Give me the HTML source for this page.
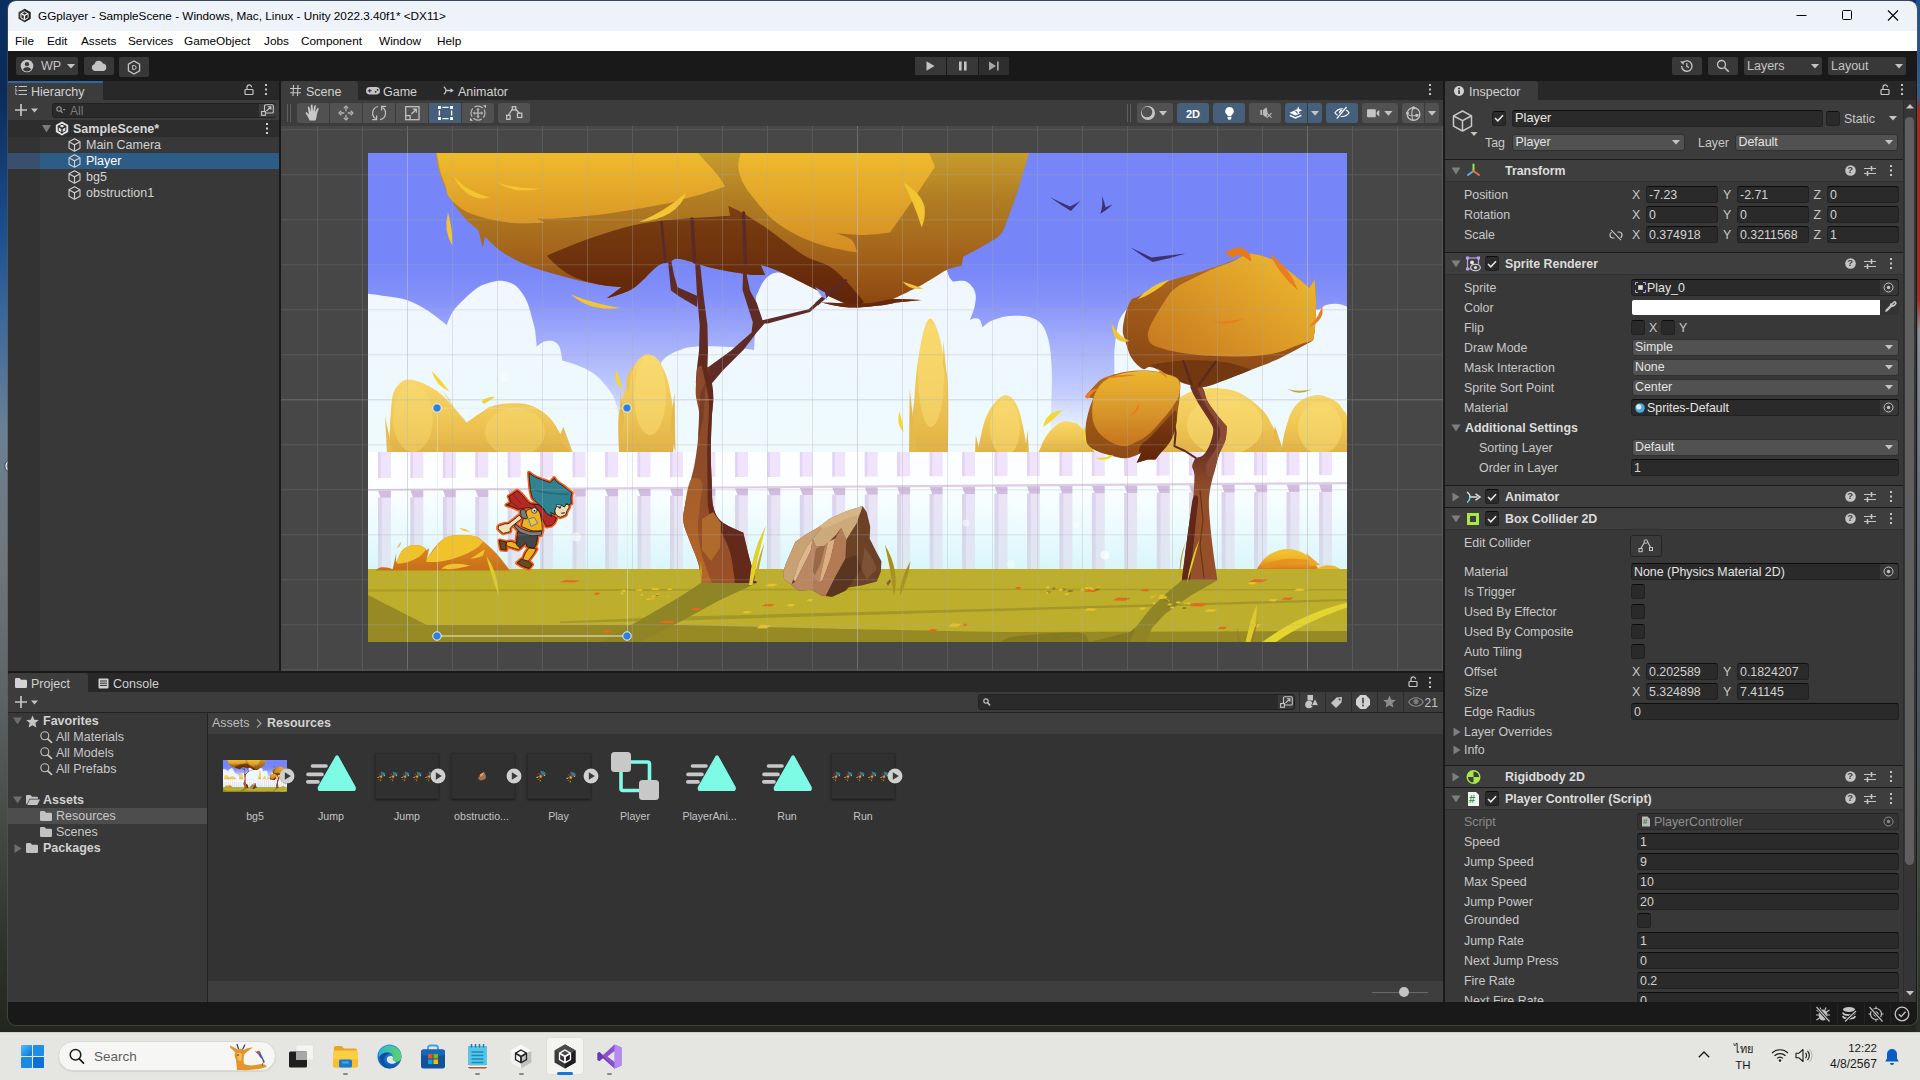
<!DOCTYPE html>
<html lang="en"><head><meta charset="utf-8"><title>GGplayer - SampleScene - Unity</title>
<style>
*{box-sizing:border-box;margin:0;padding:0}
html,body{width:1920px;height:1080px;overflow:hidden;background:#1a2a3a}
body{position:relative;font-family:"Liberation Sans",sans-serif;font-size:12px;color:#d2d2d2}
.a{position:absolute}
.t{position:absolute;white-space:nowrap;line-height:16px;height:16px}
.b{font-weight:bold}
svg{position:absolute;overflow:visible}
.mn{top:33px;font-size:11.8px;color:#000}
.tb{background:#383838;border-radius:2px}
.fld{height:17px;background:#2a2a2a;border:1px solid #212121;border-top-color:#0d0d0d;border-radius:3px}
.fld.dim{background:#323232;border-color:#2a2a2a;border-top-color:#222}
.dd{height:17px;background:#515151;border:1px solid #303030;border-radius:3px}
.cb{width:14px;height:15px;background:#2a2a2a;border:1px solid #212121;border-top-color:#0d0d0d;border-radius:3px}
.dot{top:1072.500px;width:5px;height:2.500px;border-radius:1.250px;background:#8a8a88}

</style></head>
<body>

<!-- desktop.html -->
<div class="a" id="desk" style="left:0;top:0;width:1920px;height:1080px;background:linear-gradient(180deg,#0b2f63 0px,#0a2b5a 90px,#1b4f8c 230px,#3f6c9c 330px,#6b7f92 430px,#70777c 560px,#5d6264 700px,#474b47 820px,#2e322b 950px,#23261f 1032px)"></div>
<div class="a" style="left:1916px;top:0;width:4px;height:1032px;background:linear-gradient(180deg,#1d4f8d 0px,#2b5c98 95px,#b3221c 110px,#b3221c 300px,#8d8f98 330px,#5f6a78 520px,#4a5660 700px,#3a4438 900px,#2a2e26 1032px)"></div>

<svg id="deskc" style="left:0;top:458px;overflow:hidden" width="8" height="16" viewBox="0 0 8 16"><path d="M9 3.500A4.800 4.800 0 0 0 9 12.500" stroke="#f4f4f4" stroke-width="1.300" fill="none"/><path d="M9 2.300A6 6 0 0 0 9 13.700" stroke="rgba(20,40,90,.6)" stroke-width="1" fill="none"/></svg>

<!-- chrome.html -->
<div class="a" id="win" style="left:8px;top:1px;width:1908.500px;height:1023.500px;background:#191919;border-radius:8px;overflow:hidden;box-shadow:0 0 0 1px rgba(90,90,90,.55)">
 <div class="a" style="left:0;top:0;width:1909px;height:30px;background:#eef3fa"></div>
 <div class="a" style="left:0;top:30px;width:1909px;height:20px;background:#ffffff"></div>
</div>
<!-- title bar -->
<svg style="left:17px;top:8px" width="15" height="15" viewBox="0 0 18 18"><path d="M9 .8 16.2 5v8L9 17.2 1.8 13V5z" fill="#3a3a3a"/><path d="M9 .8 16.2 5v8L9 17.2z" fill="#222"/><path d="M9 9 9 14.2M9 9 4.6 6.5M9 9l4.4-2.5" stroke="#fff" stroke-width="1.5" fill="none"/><path d="M9 4.4 13.3 6.9v4.9L9 14.2 4.7 11.8V6.9z" stroke="#fff" stroke-width="1.1" fill="none"/></svg>
<div class="t" style="left:38px;top:8px;font-size:11.75px;color:#000">GGplayer - SampleScene - Windows, Mac, Linux - Unity 2022.3.40f1* &lt;DX11&gt;</div>
<svg style="left:1796px;top:10px" width="110" height="12" viewBox="0 0 110 12"><path d="M0.5 5.5h10" stroke="#000" stroke-width="1" fill="none"/><rect x="46.5" y=".5" width="9" height="9" rx="1" stroke="#000" stroke-width="1" fill="none"/><path d="M92 0.5l10 10M102 .5l-10 10" stroke="#000" stroke-width="1.1" fill="none"/></svg>
<!-- menu -->
<div class="t mn" style="left:15px">File</div><div class="t mn" style="left:47px">Edit</div><div class="t mn" style="left:81px">Assets</div><div class="t mn" style="left:128px">Services</div><div class="t mn" style="left:184px">GameObject</div><div class="t mn" style="left:264px">Jobs</div><div class="t mn" style="left:301px">Component</div><div class="t mn" style="left:379px">Window</div><div class="t mn" style="left:437px">Help</div>
<!-- main toolbar -->
<div class="a tb" style="left:16px;top:57px;width:62px;height:18px"></div>
<svg style="left:20px;top:59px" width="14" height="14" viewBox="0 0 14 14"><circle cx="7" cy="7" r="6.3" fill="#c4c4c4"/><circle cx="7" cy="5.2" r="2.1" fill="#383838"/><path d="M2.9 10.6c.9-1.7 2.4-2.3 4.1-2.3s3.2.6 4.1 2.3c-1 1.300-2.500 2-4.100 2s-3.100-.7-4.100-2z" fill="#383838"/></svg>
<div class="t" style="left:41px;top:58px;color:#c4c4c4;font-size:12.5px">WP</div>
<svg style="left:67px;top:64px" width="8" height="5" viewBox="0 0 8 5"><path d="M0 0h8L4 4.600z" fill="#c4c4c4"/></svg>
<div class="a tb" style="left:84px;top:57px;width:30px;height:18px"></div>
<svg style="left:91px;top:60px" width="16" height="12" viewBox="0 0 16 12"><path d="M4 11a3.400 3.400 0 0 1-.5-6.700A4.300 4.300 0 0 1 11.800 3.500 3.800 3.800 0 0 1 12.300 11z" fill="#c4c4c4"/></svg>
<div class="a tb" style="left:119px;top:57px;width:30px;height:20px"></div>
<svg style="left:127px;top:60px" width="14" height="15" viewBox="0 0 14 15"><path d="M7 1 12.600 4.200v6.600L7 14 1.400 10.800V4.200z" stroke="#c4c4c4" stroke-width="1.300" fill="none"/><path d="M5.600 5.600h1.600a1.900 1.900 0 0 1 0 3.800H5.600z" stroke="#c4c4c4" stroke-width="1" fill="none"/></svg>
<!-- play controls -->
<div class="a tb" style="left:915px;top:57px;width:31px;height:18px;border-radius:0"></div>
<div class="a tb" style="left:947px;top:57px;width:31px;height:18px;border-radius:0"></div>
<div class="a" style="left:979px;top:57px;width:30px;height:18px;background:#2e2e2e"></div>
<svg style="left:915px;top:57px" width="94" height="18" viewBox="0 0 94 18"><path d="M11.500 4.200 19.500 9l-8 4.800z" fill="#c4c4c4"/><path d="M44 4.500h2.600v9H44zM49 4.500h2.600v9H49z" fill="#c4c4c4"/><path d="M74 4.500 81 9l-7 4.500zM82 4.500h1.700v9H82z" fill="#a6a6a6"/></svg>
<!-- right tools -->
<div class="a tb" style="left:1672px;top:57px;width:30px;height:18px"></div>
<svg style="left:1679px;top:59px" width="15" height="14" viewBox="0 0 15 14"><path d="M2.600 7A5.200 5.200 0 1 0 4.300 3.200" stroke="#c4c4c4" stroke-width="1.300" fill="none"/><path d="M1 2.200 4.800 2.400 4.500 6z" fill="#c4c4c4"/><path d="M7.800 4v3.300l2.200 1.300" stroke="#c4c4c4" stroke-width="1.200" fill="none"/></svg>
<div class="a tb" style="left:1708px;top:57px;width:30px;height:18px"></div>
<svg style="left:1716px;top:59px" width="14" height="14" viewBox="0 0 14 14"><circle cx="5.500" cy="5.500" r="4" stroke="#c4c4c4" stroke-width="1.300" fill="none"/><path d="M8.500 8.500 12.800 12.800" stroke="#c4c4c4" stroke-width="1.600"/></svg>
<div class="a tb" style="left:1744px;top:57px;width:78px;height:18px"></div>
<div class="t" style="left:1747px;top:58px;color:#c4c4c4;font-size:12.5px">Layers</div>
<svg style="left:1811px;top:64px" width="8" height="5" viewBox="0 0 8 5"><path d="M0 0h8L4 4.600z" fill="#c4c4c4"/></svg>
<div class="a tb" style="left:1828px;top:57px;width:78px;height:18px"></div>
<div class="t" style="left:1831px;top:58px;color:#c4c4c4;font-size:12.5px">Layout</div>
<svg style="left:1895px;top:64px" width="8" height="5" viewBox="0 0 8 5"><path d="M0 0h8L4 4.600z" fill="#c4c4c4"/></svg>

<!-- hierarchy.html -->
<div class="a" style="left:8px;top:81px;width:271px;height:590px;background:#383838"></div>
<div class="a" style="left:8px;top:81px;width:271px;height:19px;background:#282828"></div>
<div class="a" style="left:8px;top:81px;width:95px;height:19px;background:#3c3c3c;border-top:2px solid #2c68a5"></div>
<svg style="left:15px;top:86px" width="12" height="10" viewBox="0 0 12 10"><path d="M0 .5h2M3.500 .5h8.500M3.500 4.500h8.500M3.500 8.500h8.500" stroke="#c4c4c4" stroke-width="1.200"/><path d="M.8 1.500v3h1.500M.8 4.500v4h1.500" stroke="#c4c4c4" stroke-width=".8" fill="none"/></svg>
<div class="t" style="left:31px;top:84px;font-size:12.5px;color:#d2d2d2">Hierarchy</div>
<svg style="left:244px;top:84px" width="10" height="11" viewBox="0 0 10 11"><rect x="1" y="5.500" width="8" height="5" rx=".8" stroke="#c4c4c4" stroke-width="1.200" fill="none"/><path d="M3 5.500V3.200a2.300 2.300 0 0 1 4.600 0" stroke="#c4c4c4" stroke-width="1.200" fill="none"/></svg>
<svg style="left:264px;top:84px" width="4" height="12" viewBox="0 0 4 12"><rect x="1" y="0" width="2" height="2" fill="#c4c4c4"/><rect x="1" y="4.500" width="2" height="2" fill="#c4c4c4"/><rect x="1" y="9" width="2" height="2" fill="#c4c4c4"/></svg>
<!-- search row -->
<div class="a" style="left:8px;top:100px;width:271px;height:20px;background:#3c3c3c"></div>
<svg style="left:15px;top:104px" width="24" height="12" viewBox="0 0 24 12"><path d="M6 0v12M0 6h12" stroke="#c4c4c4" stroke-width="1.700"/><path d="M16 4.500h7L19.500 8.500z" fill="#c4c4c4"/></svg>
<div class="a" style="left:52px;top:103px;width:224px;height:15px;background:#2a2a2a;border-radius:3px;border:1px solid #212121"></div>
<svg style="left:56px;top:106px" width="10" height="9" viewBox="0 0 10 9"><circle cx="3" cy="3" r="2.200" stroke="#9a9a9a" stroke-width="1.100" fill="none"/><path d="M4.600 4.600 6.500 6.800" stroke="#9a9a9a" stroke-width="1.200"/><path d="M6.800 3h2.700L8.150 4.700z" fill="#9a9a9a"/></svg>
<div class="t" style="left:70px;top:103px;font-size:12px;color:#7b7b7b">All</div>
<div class="a" style="left:259px;top:104px;width:17px;height:13px;background:#3c3c3c;border-radius:0 3px 3px 0"></div>
<svg style="left:261px;top:104px" width="13" height="12" viewBox="0 0 13 12"><rect x="3.500" y=".7" width="8.800" height="8.300" rx="1" stroke="#c4c4c4" stroke-width="1.100" fill="none"/><rect x=".6" y="7.500" width="3.800" height="3.800" stroke="#c4c4c4" stroke-width="1.100" fill="#3c3c3c"/><path d="M5.500 7 9.800 2.800M6.800 2.700h3.100v3.100" stroke="#c4c4c4" stroke-width="1.100" fill="none"/></svg>
<!-- tree -->
<div class="a" style="left:8px;top:137px;width:32px;height:534px;background:#333333"></div>
<div class="a" style="left:8px;top:120px;width:271px;height:17px;background:#2d2d2d"></div>
<svg style="left:42px;top:125px" width="9" height="8" viewBox="0 0 9 8"><path d="M0 0h9L4.500 7.500z" fill="#7a7a7a"/></svg>
<svg style="left:55px;top:121px" width="14" height="15" viewBox="0 0 14 15"><path d="M7 .5 13.200 4v7L7 14.500.8 11V4z" fill="#e4e4e4"/><path d="M7 7.500v5M7 7.500 2.800 5M7 7.500 11.200 5" stroke="#2d2d2d" stroke-width="1.500" fill="none"/><path d="M7 3.200 10.800 5.400v4.300L7 11.900 3.200 9.700V5.400z" stroke="#2d2d2d" stroke-width="1" fill="none"/></svg>
<div class="t b" style="left:73px;top:121px;font-size:12.5px;color:#d7d7d7">SampleScene*</div>
<svg style="left:265px;top:123px" width="4" height="12" viewBox="0 0 4 12"><rect x="1" y="0" width="2" height="2" fill="#d2d2d2"/><rect x="1" y="4.500" width="2" height="2" fill="#d2d2d2"/><rect x="1" y="9" width="2" height="2" fill="#d2d2d2"/></svg>
<div class="a" style="left:40px;top:153px;width:239px;height:16px;background:#2c5d87"></div>
<div class="a" style="left:8px;top:153px;width:32px;height:16px;background:#38506e"></div>
<svg width="0" height="0"><defs><g id="cube"><path d="M6.500 .8 12 3.800v6.400L6.500 13.200 1 10.200V3.800z" stroke="#d0d0d0" stroke-width="1.100" fill="none" stroke-linejoin="round"/><path d="M1.200 3.900 6.500 6.800 11.800 3.900M6.500 6.800V13" stroke="#d0d0d0" stroke-width="1.100" fill="none"/></g></defs></svg>
<svg style="left:68px;top:138px" width="13" height="14" viewBox="0 0 13 14"><use href="#cube"/></svg>
<svg style="left:68px;top:154px" width="13" height="14" viewBox="0 0 13 14"><use href="#cube"/></svg>
<svg style="left:68px;top:170px" width="13" height="14" viewBox="0 0 13 14"><use href="#cube"/></svg>
<svg style="left:68px;top:186px" width="13" height="14" viewBox="0 0 13 14"><use href="#cube"/></svg>
<div class="t" style="left:86px;top:137px;font-size:12.5px">Main Camera</div>
<div class="t" style="left:86px;top:153px;font-size:12.5px;color:#fff">Player</div>
<div class="t" style="left:86px;top:169px;font-size:12.5px">bg5</div>
<div class="t" style="left:86px;top:185px;font-size:12.5px">obstruction1</div>

<!-- scene.html -->
<div class="a" style="left:281px;top:81px;width:1162px;height:590px;background:#474747"></div>
<div class="a" style="left:281px;top:81px;width:1162px;height:19px;background:#282828"></div>
<div class="a" style="left:281px;top:81px;width:77px;height:19px;background:#3c3c3c;border-radius:3px 3px 0 0"></div>
<div class="a" style="left:281px;top:100px;width:1162px;height:26px;background:#3c3c3c"></div>
<svg style="left:290px;top:85px" width="11" height="11" viewBox="0 0 11 11"><path d="M3.500 0 3 11M8 0 7.500 11M0 3.500h11M0 7.800h11" stroke="#c4c4c4" stroke-width="1.100" fill="none"/></svg>
<div class="t" style="left:306px;top:84px;font-size:12.5px">Scene</div>
<svg style="left:366px;top:87px" width="14" height="8" viewBox="0 0 14 8"><rect x="0" y="0" width="14" height="7.600" rx="3.800" fill="#c4c4c4"/><path d="M3.700 2v3.600M1.900 3.800h3.600" stroke="#282828" stroke-width="1.100"/><circle cx="9.600" cy="4.800" r=".9" fill="#282828"/><circle cx="11.600" cy="2.900" r=".9" fill="#282828"/></svg>
<div class="t" style="left:383px;top:84px;font-size:12.5px">Game</div>
<svg style="left:443px;top:86px" width="11" height="9" viewBox="0 0 11 9"><path d="M.8 .8c1.500 1 2.200 2.200 2.200 3.700h5.500M3 4.500C3 6 2.300 7.200.8 8.200" stroke="#c4c4c4" stroke-width="1.300" fill="none"/><path d="M7.500 2.300 10.800 4.500 7.500 6.700z" fill="#c4c4c4"/></svg>
<div class="t" style="left:458px;top:84px;font-size:12.5px">Animator</div>
<svg style="left:1428px;top:84px" width="4" height="12" viewBox="0 0 4 12"><rect x="1" y="0" width="2" height="2" fill="#c4c4c4"/><rect x="1" y="4.500" width="2" height="2" fill="#c4c4c4"/><rect x="1" y="9" width="2" height="2" fill="#c4c4c4"/></svg>
<div class="a" style="left:287px;top:104px;width:1px;height:18px;background:#5e5e5e"></div>
<div class="a" style="left:290px;top:104px;width:1px;height:18px;background:#5e5e5e"></div>
<div class="a" style="left:1127px;top:104px;width:1px;height:18px;background:#5e5e5e"></div>
<div class="a" style="left:1130px;top:104px;width:1px;height:18px;background:#5e5e5e"></div>
<div class="a" style="left:297px;top:103px;width:32px;height:20px;background:#515151;border-radius:3px 0 0 3px"></div>
<div class="a" style="left:330px;top:103px;width:32px;height:20px;background:#515151;border-radius:0"></div>
<div class="a" style="left:363px;top:103px;width:32px;height:20px;background:#515151;border-radius:0"></div>
<div class="a" style="left:396px;top:103px;width:32px;height:20px;background:#515151;border-radius:0"></div>
<div class="a" style="left:429px;top:103px;width:32px;height:20px;background:#46607c;border-radius:0"></div>
<div class="a" style="left:462px;top:103px;width:32px;height:20px;background:#515151;border-radius:0 3px 3px 0"></div>
<div class="a" style="left:498px;top:103px;width:32px;height:20px;background:#515151;border-radius:3px"></div>
<div class="a" style="left:1137px;top:103px;width:36px;height:20px;background:#515151;border-radius:3px"></div>
<div class="a" style="left:1177px;top:103px;width:32px;height:20px;background:#46607c;border-radius:3px"></div>
<div class="a" style="left:1213px;top:103px;width:32px;height:20px;background:#46607c;border-radius:3px"></div>
<div class="a" style="left:1249px;top:103px;width:32px;height:20px;background:#515151;border-radius:3px"></div>
<div class="a" style="left:1285px;top:103px;width:22px;height:20px;background:#46607c;border-radius:3px 0 0 3px"></div>
<div class="a" style="left:1308px;top:103px;width:14px;height:20px;background:#46607c;border-radius:0 3px 3px 0"></div>
<div class="a" style="left:1326px;top:103px;width:32px;height:20px;background:#46607c;border-radius:3px"></div>
<div class="a" style="left:1362px;top:103px;width:36px;height:20px;background:#515151;border-radius:3px"></div>
<div class="a" style="left:1402px;top:103px;width:22px;height:20px;background:#515151;border-radius:3px 0 0 3px"></div>
<div class="a" style="left:1425px;top:103px;width:14px;height:20px;background:#515151;border-radius:0 3px 3px 0"></div>
<svg style="left:305px;top:104px" width="17" height="17" viewBox="0 0 17 17"><path d="M4.600 16.500C3.600 14 2 11.500.7 9.600c-.6-.9.500-1.800 1.400-1l1.800 1.800L2.800 3.600c-.2-1.100 1.300-1.400 1.600-.3l1.200 4.500L5.900 1.500c0-1.200 1.600-1.200 1.700 0l.4 6.100 1.300-5.600c.3-1.100 1.800-.8 1.600.3L10 8.300l2.100-3.900c.6-1 1.900-.3 1.500.7-1 2.500-1.700 5-2.100 7.800-.2 1.300-.6 2.500-1.100 3.600z" fill="#c8c8c8"/></svg>
<svg style="left:338px;top:105px" width="16" height="16" viewBox="0 0 16 16"><g stroke="#b4b4b4" stroke-width="1.300" fill="none"><path d="M8 2.500V6.300M8 9.700V13.500M2.500 8H6.300M9.700 8H13.500"/><path d="M5.800 3.300 8 1.100 10.200 3.300M5.800 12.700 8 14.900 10.200 12.700M3.300 5.800 1.100 8 3.300 10.200M12.700 5.800 14.900 8 12.700 10.200"/></g></svg>
<svg style="left:371px;top:105px" width="16" height="16" viewBox="0 0 16 16"><g stroke="#c0c0c0" stroke-width="1.250" fill="none"><path d="M7 1.500A6.700 6.700 0 0 0 4.600 13.600"/><path d="M1.300 14.600H5.600V10.400"/><path d="M9 14.600A6.700 6.700 0 0 0 11.500 2.400"/><path d="M15 1.300H10.600V5.500"/></g></svg>
<svg style="left:404.500px;top:106px" width="15" height="15" viewBox="0 0 15 15"><g stroke="#c4c4c4" stroke-width="1.250" fill="none"><rect x=".7" y=".7" width="13.300" height="13"/><path d="M.7 9.500h4.400v4.200"/><path d="M6.500 8 11 3.500M7.800 3.200h3.500v3.500"/></g></svg>
<svg style="left:437.500px;top:106px" width="15" height="14" viewBox="0 0 15 14"><path d="M4.400 1.400h6.200M4.400 12.600h6.200M1.400 4.400v5.200M13.600 4.400v5.200" stroke="#fff" stroke-width="1.300"/><rect x="0" y="0" width="2.900" height="2.900" fill="#fff"/><rect x="12.100" y="0" width="2.900" height="2.900" fill="#fff"/><rect x="0" y="11.100" width="2.900" height="2.900" fill="#fff"/><rect x="12.100" y="11.100" width="2.900" height="2.900" fill="#fff"/></svg>
<svg style="left:470px;top:105px" width="16" height="16" viewBox="0 0 16 16"><circle cx="8" cy="8.100" r="7" stroke="#b8b8b8" stroke-width="1.200" fill="none" stroke-dasharray="9 2" stroke-dashoffset="4"/><path d="M8 2.800 9.800 5H8.700V7.400H11.100V6.300L13.300 8.100 11.100 9.900V8.800H8.700V11.200H9.800L8 13.400 6.200 11.200H7.300V8.800H4.900V9.900L2.700 8.100 4.900 6.300V7.400H7.300V5H6.200z" fill="#b4b4b4"/><path d="M13 .3H16V3.300zM0 12.800V15.800H3z" fill="#d0d0d0"/></svg>
<svg style="left:506px;top:106px" width="17" height="14" viewBox="0 0 17 14"><g stroke="#c8c8c8" stroke-width="1.250" fill="#515151"><path d="M2.200 9.500 6.800 2.500M9.200 2.500 13.500 7.500" fill="none"/><rect x="6.300" y=".7" width="3.400" height="3.200"/><rect x=".7" y="9.300" width="3.400" height="4"/><rect x="11.500" y="7.200" width="4.300" height="4.300"/></g></svg>
<svg style="left:1141px;top:106px" width="28" height="14" viewBox="0 0 28 14"><circle cx="7" cy="7" r="7" fill="#c6c6c6"/><circle cx="6" cy="6" r="5.300" fill="#515151"/><path d="M18 5h8L22 9.800z" fill="#c4c4c4"/></svg>
<div class="t b" style="left:1186px;top:105.500px;font-size:11px;color:#fff">2D</div>
<svg style="left:1224.500px;top:106.500px" width="9" height="13" viewBox="0 0 9 13"><path d="M4.500 0a4.300 4.300 0 0 1 2.300 7.900c-.3.200-.5.600-.5 1v.4H2.700v-.4c0-.4-.2-.8-.5-1A4.300 4.300 0 0 1 4.500 0z" fill="#fff"/><path d="M2.600 10h3.800v.9a1.900 1.900 0 0 1-3.800 0z" fill="#fff"/></svg>
<svg style="left:1259.500px;top:107px" width="13" height="11" viewBox="0 0 13 11"><rect x=".3" y="3" width="1.800" height="5" fill="#b8b8b8"/><path d="M3 3 6.500 .3C7.800 3.500 7.800 7.500 6.500 10.700L3 8z" fill="#b8b8b8"/><path d="M7 6.200 11.500 10.700M11.500 6.200 7 10.700" stroke="#b8b8b8" stroke-width="1.100"/></svg>
<svg style="left:1289px;top:106px" width="14" height="13" viewBox="0 0 14 13"><path d="M.5 6.800 5.500 4.600 8 7.500 12.500 6.800 6.500 9.600z" fill="#fff"/><path d="M.8 9.300 6.500 12 12.300 9.300" stroke="#fff" stroke-width="1.400" fill="none"/><path d="M9.300 .3 10.400 3.200 13.300 4.300 10.400 5.400 9.300 8.300 8.200 5.400 5.300 4.300 8.200 3.200z" fill="#fff"/></svg>
<svg style="left:1311px;top:110.500px" width="8" height="5" viewBox="0 0 8 5"><path d="M0 0h8L4 4.800z" fill="#c4c4c4"/></svg>
<svg style="left:1334px;top:106px" width="16" height="13" viewBox="0 0 16 13"><path d="M1 6.800C2.800 3.800 5.500 2.800 8 2.800s5.200 1 7 4c-1.800 2.800-4.500 3.700-7 3.700s-5.200-.9-7-3.700z" stroke="#fff" stroke-width="1.200" fill="none"/><path d="M3 12.500 12.800 .8" stroke="#46607c" stroke-width="3.200"/><path d="M2.800 12.600 12.600 .8" stroke="#fff" stroke-width="1.300"/><path d="M5 7.800A3 3 0 0 1 8.800 4z" fill="#fff"/></svg>
<svg style="left:1366.500px;top:109px" width="26" height="9" viewBox="0 0 26 9"><rect x="0" y=".2" width="8.800" height="8" rx="1" fill="#c4c4c4"/><path d="M9.700 3.200 12.300 .8V7.600L9.700 5.200z" fill="#c4c4c4"/><path d="M17.200 2h8.300L21.300 6.800z" fill="#c4c4c4"/></svg>
<svg style="left:1405.500px;top:105.500px" width="15" height="16" viewBox="0 0 15 16"><circle cx="7.500" cy="8" r="6.400" stroke="#c4c4c4" stroke-width="1.200" fill="none"/><path d="M1.200 8c2 2.300 10.600 2.300 12.600 0M7.500 1.600c-2.200 2-2.200 10.800 0 12.800" stroke="#c4c4c4" stroke-width="1.100" fill="none"/><circle cx="7.700" cy="1.800" r="1.600" fill="#c4c4c4"/><circle cx="1.500" cy="7" r="1.500" fill="#c4c4c4"/><circle cx="10.700" cy="9.300" r="1.600" fill="#c4c4c4"/></svg>
<svg style="left:1428px;top:110.500px" width="8" height="5" viewBox="0 0 8 5"><path d="M0 0h8L4 4.800z" fill="#c4c4c4"/></svg>
<div class="a" id="sceneview" style="left:281px;top:126px;width:1162px;height:545px;overflow:hidden;background:#474747">
<svg style="left:0;top:0" width="1162" height="545" viewBox="281 126 1162 545">
<g id="gridunder"><path d="M317.5 126V671" stroke="#595959" stroke-width="1"/><path d="M362.5 126V671" stroke="#595959" stroke-width="1"/><path d="M407.5 126V671" stroke="#6c6c6c" stroke-width="1"/><path d="M452.5 126V671" stroke="#595959" stroke-width="1"/><path d="M497.5 126V671" stroke="#595959" stroke-width="1"/><path d="M542.5 126V671" stroke="#595959" stroke-width="1"/><path d="M587.5 126V671" stroke="#595959" stroke-width="1"/><path d="M632.5 126V671" stroke="#595959" stroke-width="1"/><path d="M677.5 126V671" stroke="#595959" stroke-width="1"/><path d="M722.5 126V671" stroke="#595959" stroke-width="1"/><path d="M767.5 126V671" stroke="#595959" stroke-width="1"/><path d="M812.5 126V671" stroke="#595959" stroke-width="1"/><path d="M857.5 126V671" stroke="#6c6c6c" stroke-width="1"/><path d="M902.5 126V671" stroke="#595959" stroke-width="1"/><path d="M947.5 126V671" stroke="#595959" stroke-width="1"/><path d="M992.5 126V671" stroke="#595959" stroke-width="1"/><path d="M1037.5 126V671" stroke="#595959" stroke-width="1"/><path d="M1082.5 126V671" stroke="#595959" stroke-width="1"/><path d="M1127.5 126V671" stroke="#595959" stroke-width="1"/><path d="M1172.5 126V671" stroke="#595959" stroke-width="1"/><path d="M1217.5 126V671" stroke="#595959" stroke-width="1"/><path d="M1262.5 126V671" stroke="#595959" stroke-width="1"/><path d="M1307.5 126V671" stroke="#6c6c6c" stroke-width="1"/><path d="M1352.5 126V671" stroke="#595959" stroke-width="1"/><path d="M1397.5 126V671" stroke="#595959" stroke-width="1"/><path d="M1442.5 126V671" stroke="#595959" stroke-width="1"/><path d="M281 129.8H1443" stroke="#595959" stroke-width="1"/><path d="M281 174.8H1443" stroke="#595959" stroke-width="1"/><path d="M281 219.8H1443" stroke="#595959" stroke-width="1"/><path d="M281 264.8H1443" stroke="#595959" stroke-width="1"/><path d="M281 309.8H1443" stroke="#595959" stroke-width="1"/><path d="M281 354.8H1443" stroke="#595959" stroke-width="1"/><path d="M281 399.8H1443" stroke="#6c6c6c" stroke-width="1"/><path d="M281 444.8H1443" stroke="#595959" stroke-width="1"/><path d="M281 489.8H1443" stroke="#595959" stroke-width="1"/><path d="M281 534.8H1443" stroke="#595959" stroke-width="1"/><path d="M281 579.8H1443" stroke="#595959" stroke-width="1"/><path d="M281 624.8H1443" stroke="#595959" stroke-width="1"/><path d="M281 669.8H1443" stroke="#595959" stroke-width="1"/></g>
<defs><linearGradient id="gsky" gradientUnits="userSpaceOnUse" x1="0" y1="153" x2="0" y2="452"><stop offset="0" stop-color="#7685f8"/><stop offset="0.36" stop-color="#7685f8"/><stop offset="0.49" stop-color="#8592f9"/><stop offset="0.63" stop-color="#a3aefb"/><stop offset="0.83" stop-color="#c9d2fd"/><stop offset="1" stop-color="#e8eefe"/></linearGradient>
<linearGradient id="gcl" gradientUnits="userSpaceOnUse" x1="0" y1="270" x2="0" y2="452"><stop offset="0" stop-color="#f1f6fe"/><stop offset="0.5" stop-color="#eef8fe"/><stop offset="1" stop-color="#ecfafe"/></linearGradient>
<linearGradient id="ghz" gradientUnits="userSpaceOnUse" x1="0" y1="395" x2="0" y2="452"><stop offset="0" stop-color="rgba(240,250,255,0)"/><stop offset="1" stop-color="rgba(240,250,255,.95)"/></linearGradient>
<linearGradient id="gbu" x1="0" y1="0" x2="0" y2="1"><stop offset="0" stop-color="#f8d768"/><stop offset="0.55" stop-color="#efc654"/><stop offset="1" stop-color="#e0b145"/></linearGradient>
<linearGradient id="gfl" gradientUnits="userSpaceOnUse" x1="0" y1="495" x2="0" y2="570"><stop offset="0" stop-color="#f8feff"/><stop offset="0.5" stop-color="#e9fafe"/><stop offset="1" stop-color="#d9f5fc"/></linearGradient>
<linearGradient id="gfb" gradientUnits="userSpaceOnUse" x1="0" y1="495" x2="0" y2="570"><stop offset="0" stop-color="#eae3f6"/><stop offset="1" stop-color="#dde7f1"/></linearGradient>
<linearGradient id="gfs" gradientUnits="userSpaceOnUse" x1="0" y1="495" x2="0" y2="570"><stop offset="0" stop-color="#ddd2ed"/><stop offset="1" stop-color="#d3dbe9"/></linearGradient>
<linearGradient id="gob" x1="0" y1="0" x2="0" y2="1"><stop offset="0" stop-color="#f2c52e"/><stop offset="0.45" stop-color="#efb72a"/><stop offset="1" stop-color="#de7a1b"/></linearGradient>
<linearGradient id="gob2" x1="0" y1="0" x2="0" y2="1"><stop offset="0" stop-color="#e3951f"/><stop offset="1" stop-color="#c86d1a"/></linearGradient>
<linearGradient id="gtr" gradientUnits="userSpaceOnUse" x1="0" y1="370" x2="0" y2="583"><stop offset="0" stop-color="#8b4a2b"/><stop offset="0.55" stop-color="#8f4c2a"/><stop offset="1" stop-color="#9a5026"/></linearGradient>
<linearGradient id="gtl" x1="0" y1="0" x2="0" y2="1"><stop offset="0" stop-color="#a55d2a"/><stop offset="1" stop-color="#b5672a"/></linearGradient>
<linearGradient id="gco" gradientUnits="userSpaceOnUse" x1="0" y1="153" x2="0" y2="308"><stop offset="0" stop-color="#c69c2c"/><stop offset="0.3" stop-color="#b07d23"/><stop offset="0.62" stop-color="#a5661c"/><stop offset="1" stop-color="#8c450f"/></linearGradient>
<linearGradient id="gla" gradientUnits="userSpaceOnUse" x1="0" y1="153" x2="0" y2="225"><stop offset="0" stop-color="#efbb2d"/><stop offset="1" stop-color="#da9625"/></linearGradient>
<linearGradient id="glb" gradientUnits="userSpaceOnUse" x1="0" y1="153" x2="0" y2="253"><stop offset="0" stop-color="#efbb2d"/><stop offset="1" stop-color="#d38c23"/></linearGradient>
<linearGradient id="gbr" gradientUnits="userSpaceOnUse" x1="0" y1="205" x2="0" y2="308"><stop offset="0" stop-color="#7c4012"/><stop offset="1" stop-color="#5f2309"/></linearGradient>
<linearGradient id="grt" gradientUnits="userSpaceOnUse" x1="0" y1="390" x2="0" y2="580"><stop offset="0" stop-color="#6a3325"/><stop offset="0.32" stop-color="#6a3325"/><stop offset="0.55" stop-color="#95502a"/><stop offset="1" stop-color="#95502a"/></linearGradient>
<linearGradient id="gro" x1="0.3" y1="0" x2="0.1" y2="1"><stop offset="0" stop-color="#b36c1e"/><stop offset="1" stop-color="#854212"/></linearGradient>
<linearGradient id="grl" x1="0" y1="0.9" x2="1" y2="0.1"><stop offset="0" stop-color="#c77a20"/><stop offset="0.5" stop-color="#dc9a27"/><stop offset="1" stop-color="#edb92e"/></linearGradient>
<linearGradient id="gsc0" x1="0" y1="0" x2="0" y2="1"><stop offset="0" stop-color="#b06c1c"/><stop offset="1" stop-color="#8c4813"/></linearGradient>
<linearGradient id="gsc" x1="0" y1="0" x2="0" y2="1"><stop offset="0" stop-color="#ebb62e"/><stop offset="0.55" stop-color="#d8952a"/><stop offset="1" stop-color="#c5741d"/></linearGradient>
<linearGradient id="gsd" x1="0" y1="0" x2="0" y2="1"><stop offset="0" stop-color="#7e4013"/><stop offset="1" stop-color="#5f2309"/></linearGradient><clipPath id="artclip"><rect x="368" y="153" width="979" height="489"/></clipPath></defs>
<g id="art" clip-path="url(#artclip)">
<rect x="368" y="153" width="979" height="300" fill="url(#gsky)"/>
<path d="M368 293.7C368 293.7 378.6 294.9 385 296C391.4 297.1 399.8 297.7 406.7 300C413.6 302.3 420 305.8 426.7 310C433.4 314.2 446.7 325 446.7 325C446.7 325 449.8 316.6 452 313C454.2 309.4 455.9 307.4 460 303.3C464.1 299.2 471.7 291.8 476.7 288.3C481.7 284.8 485.8 283.8 490 282.5C494.2 281.2 498 280.6 501.7 280.8C505.4 281 509.2 282.2 512 283.5C514.8 284.8 516.3 286.2 518.3 288.3C520.3 290.4 522.3 293.2 524 296C525.7 298.8 527 301.3 528.3 305C529.6 308.7 530.9 313.8 532 318C533.1 322.2 534.2 325.2 535 330C535.8 334.8 536.7 346.7 536.7 346.7C536.7 346.7 541.5 342.5 544 341.5C546.5 340.5 549.5 340.5 551.7 340.8C553.9 341.1 555.6 342.2 557 343.5C558.4 344.8 559.1 345.4 560 348.3C560.9 351.2 562.5 360.8 562.5 360.8C562.5 360.8 571.6 362.9 576.7 365C581.8 367.1 588.3 369.7 593.3 373.3C598.3 376.9 603.1 382.2 606.7 386.7C610.3 391.1 613 394.4 615 400C617 405.6 618.2 411.2 619 420C619.8 428.8 620 453 620 453L368 453L368 293.7z" fill="url(#gcl)"/>
<path d="M640 453C640 453 647.5 412.2 650 400C652.5 387.8 652.8 386.7 655 380C657.2 373.3 658.8 365 663 360C667.2 355 674.3 352.2 680 350C685.7 347.8 688.7 347 697 346.5C705.3 346 720.5 346.4 730 347C739.5 347.6 754 350 754 350C754 350 754.7 338.3 755 330C755.3 321.7 755.2 306.4 755.8 300C756.3 293.6 757 294.8 758.3 291.7C759.5 288.6 761.3 284.5 763.3 281.7C765.2 278.9 767.8 276.5 770 275C772.2 273.5 773.4 273 776.7 272.5C780 272 784.5 273.8 790 272C795.5 270.2 810 262 810 262L900 262L946.7 270C946.7 270 948.9 276.4 950 278.3C951.1 280.2 953.3 281.7 953.3 281.7C953.3 281.7 957.8 280.8 960 280.8C962.2 280.8 964.5 280.4 966.7 281.7C968.9 282.9 971.8 285.8 973.3 288.3C974.8 290.8 975.6 293.4 975.8 296.7C975.9 300 975.2 304.4 974.2 308.3C973.2 312.2 970 320 970 320C970 320 973.3 318.3 975 318.3C976.7 318.3 978.8 318.5 980 320C981.2 321.5 982.4 327.5 982.4 327.5C982.4 327.5 986.4 323.5 989 322C991.6 320.5 995 319.3 998 318.4C1001 317.4 1004 316.7 1007 316.3C1010 315.9 1012.6 315.7 1016.3 315.8C1020 315.9 1025.4 315.9 1029.3 317C1033.2 318.1 1036.9 319.7 1039.7 322.3C1042.5 324.9 1044.5 328.4 1046.2 332.7C1047.9 337 1049.1 341.4 1050.1 348.3C1051 355.2 1051.7 365.7 1051.9 374.4C1052.1 383.1 1051.7 387.3 1051.4 400.4C1051.1 413.5 1050 453 1050 453L640 453z" fill="url(#gcl)"/>
<path d="M1114 453C1114 453 1114.3 392.8 1114.4 376C1114.5 359.2 1114 359.7 1114.4 352C1114.8 344.3 1116.1 335.5 1117 330C1117.9 324.5 1118.2 322.5 1120 318.8C1121.8 315.1 1124.7 311.1 1128 308C1131.3 304.9 1140 300 1140 300L1200 290L1300 300C1300 300 1312.7 308.5 1316.9 309.4C1321.1 310.3 1322.2 306.4 1325 305.5C1327.8 304.6 1331.1 304 1333.8 303.8C1336.5 303.6 1338.8 304 1341 304.5C1343.2 305 1347 306.6 1347 306.6L1347 453L1114 453z" fill="url(#gcl)"/>
<rect x="368" y="395" width="979" height="58" fill="url(#ghz)"/>
<path d="M389 453C389 453 389.7 431.6 390 425C390.3 418.4 390.2 418.6 390.8 413.3C391.4 408 391.5 398.6 393.3 393.3C395.1 388 398.6 384 401.7 381.7C404.8 379.4 407.5 379.1 411.7 379.7C415.9 380.2 422 382.7 426.7 385C431.4 387.3 435.6 389.7 440 393.3C444.4 396.9 448.9 401.8 453.3 406.7C457.8 411.6 466.7 422.5 466.7 422.5C466.7 422.5 475.6 416.1 480 413.3C484.4 410.5 488.3 407.5 493.3 405.8C498.3 404.1 504.4 403.6 510 403.3C515.6 403 521.7 403.1 526.7 404.2C531.7 405.3 535.8 407.4 540 410C544.2 412.6 548.4 416.1 551.7 420C555 423.9 556.7 427.8 560 433.3C563.3 438.8 571.7 453 571.7 453L389 453z" fill="url(#gbu)"/>
<path d="M385 416.7L393 453L387 453z" fill="#e8bd4e"/>
<path d="M563.3 426.7L573 453L558 440z" fill="#e8bd4e"/>
<path d="M441 389L455 409L449 399z" fill="#ecc455"/>
<path d="M472 420L492 405L480 416z" fill="#ecc455"/>
<ellipse cx="413" cy="418" rx="20" ry="34" fill="#f9dc74" opacity=".45"/><ellipse cx="515" cy="432" rx="30" ry="24" fill="#f9dc74" opacity=".4"/>
<path d="M619.2 453C619.2 453 617.8 428.8 618.3 420C618.8 411.2 620.6 405.6 622 400C623.4 394.4 624.5 392.5 626.7 386.7C628.9 380.9 632.2 370.1 635 365C637.8 359.9 640.8 357.5 643.3 355.8C645.8 354.1 647.5 354 650 354.7C652.5 355.4 655.5 356.3 658.3 360C661.1 363.7 664.5 370 666.7 376.7C668.9 383.4 670.5 392.2 671.7 400C673 407.8 673.9 414.5 674.2 423.3C674.5 432.1 673.3 453 673.3 453L619.2 453z" fill="url(#gbu)"/>
<ellipse cx="650" cy="395" rx="16" ry="40" fill="#f9dc74" opacity=".55"/>
<path d="M633.5 362L628 395L626 380z" fill="#ecc455"/>
<path d="M674.5 392L675.5 453L670 430z" fill="#e4b84a"/>
<path d="M620.5 392L624 420L619 440z" fill="#e4b84a"/>
<path d="M910 453C910 453 911.3 428.8 912 420C912.7 411.2 913.4 408.3 914.2 400C915 391.7 915.5 380 916.7 370C918 360 920.2 347.7 921.7 340C923.2 332.3 924.6 327.6 926 324C927.4 320.4 928.8 318.4 930.3 318.4C931.8 318.4 933.4 320.4 935 324C936.6 327.6 938.5 333.7 940 340C941.5 346.3 943 355.3 944.2 361.7C945.5 368.1 946.8 371.4 947.5 378.3C948.2 385.2 948.2 390.9 948.3 403.3C948.4 415.8 948 453 948 453L910 453z" fill="url(#gbu)"/>
<ellipse cx="931" cy="375" rx="13" ry="52" fill="#f9dc74" opacity=".55"/>
<path d="M909.7 389.2L917 453L909 453z" fill="#e4b84a"/>
<path d="M943.3 340L947.5 385L943 365z" fill="#ecc455"/>
<path d="M977 453C977 453 978.7 445.5 980 440C981.3 434.5 983 425.6 985 420C987 414.4 989.2 410.4 991.7 406.7C994.2 402.9 997.6 399.4 1000 397.5C1002.4 395.6 1003.8 395.1 1005.8 395.2C1007.8 395.3 1010 395.9 1012 398C1014 400.1 1016.3 404 1018 408C1019.7 412 1020.8 416.7 1022 422C1023.2 427.3 1024.7 434.8 1025.5 440C1026.3 445.2 1026.7 453 1026.7 453L977 453z" fill="url(#gbu)"/>
<ellipse cx="1005" cy="428" rx="15" ry="28" fill="#f9dc74" opacity=".55"/>
<path d="M975.8 435L980 453L975 453z" fill="#e4b84a"/>
<path d="M1027.5 430L1029 453L1025 453z" fill="#e4b84a"/>
<path d="M1038.4 453C1038.4 453 1042 443.7 1044 440C1046 436.3 1048.3 433.3 1050.6 430.6C1052.9 427.9 1055.5 425.6 1058 424C1060.5 422.4 1063.1 421.6 1065.6 421.3C1068.1 421.1 1070.8 421.9 1073 422.5C1075.2 423.1 1076.6 422.9 1078.8 425C1081 427.1 1083.6 430.3 1086.3 435C1089 439.7 1095 453 1095 453L1038.4 453z" fill="url(#gbu)"/>
<path d="M1160 453C1160 453 1162.5 428.5 1165 420C1167.5 411.5 1170.8 406.7 1175 402C1179.2 397.3 1185 394.2 1190 392C1195 389.8 1199.8 389.1 1205 388.5C1210.2 387.9 1215.5 387.6 1221.3 388.4C1227.1 389.1 1233.1 389.4 1240 393C1246.9 396.6 1257.2 404.7 1262.5 410C1267.8 415.3 1269.5 420.6 1272 425C1274.5 429.4 1275.7 431.6 1277.5 436.3C1279.3 441 1283 453 1283 453L1160 453z" fill="url(#gbu)"/>
<ellipse cx="1225" cy="425" rx="38" ry="30" fill="#f9dc74" opacity=".55"/>
<path d="M1275 426L1284 453L1272 445z" fill="#e4b84a"/>
<path d="M1281.3 453C1281.3 453 1282.5 441.5 1284 435C1285.5 428.5 1288.4 419 1290.6 413.8C1292.8 408.6 1294.8 406.5 1297 404C1299.2 401.5 1301.5 400.1 1303.8 398.8C1306.1 397.5 1308.5 396.6 1311 396C1313.5 395.4 1316 394.8 1318.8 395C1321.6 395.2 1324.9 396.2 1328 397.5C1331.1 398.8 1335 400.4 1337.5 402.5C1340 404.6 1341.4 407.5 1343 410C1344.6 412.5 1346.3 410.3 1347 417.5C1347.7 424.7 1347 453 1347 453L1281.3 453z" fill="url(#gbu)"/>
<ellipse cx="1320" cy="428" rx="22" ry="26" fill="#f9dc74" opacity=".55"/>
<rect x="368" y="452" width="979" height="39" fill="#fdfeff"/>
<rect x="368" y="483" width="979" height="87" fill="url(#gfl)"/>
<path d="M345.6 497.7h12.900V571h-12.900zM378 497.5h12.900V571h-12.900zM410.4 497.3h12.900V571h-12.900zM442.9 497.1h12.900V571h-12.900zM475.4 496.9h12.900V571h-12.900zM507.8 496.7h12.900V571h-12.900zM540.2 496.5h12.900V571h-12.900zM572.7 496.3h12.900V571h-12.900zM605.2 496.1h12.900V571h-12.900zM637.6 495.9h12.900V571h-12.900zM670 495.7h12.900V571h-12.900zM702.5 495.5h12.900V571h-12.900zM735 495.3h12.900V571h-12.900zM767.4 495.1h12.900V571h-12.900zM799.9 494.9h12.900V571h-12.900zM832.3 494.7h12.900V571h-12.900zM864.8 494.5h12.900V571h-12.900zM897.2 494.3h12.900V571h-12.900zM929.7 494.1h12.900V571h-12.900zM962.1 493.9h12.900V571h-12.900zM994.6 493.7h12.900V571h-12.900zM1027 493.5h12.900V571h-12.900zM1059.5 493.3h12.900V571h-12.900zM1091.9 493.1h12.900V571h-12.900zM1124.3 492.9h12.900V571h-12.900zM1156.8 492.7h12.900V571h-12.900zM1189.2 492.5h12.900V571h-12.900zM1221.7 492.3h12.900V571h-12.900zM1254.2 492.1h12.900V571h-12.900zM1286.6 491.9h12.900V571h-12.900zM1319.1 491.7h12.900V571h-12.900zM1351.5 491.5h12.900V571h-12.900z" fill="url(#gfb)"/><path d="M345.6 497.7h3.800V571h-3.800zM378 497.5h3.800V571h-3.800zM410.4 497.3h3.800V571h-3.800zM442.9 497.1h3.800V571h-3.800zM475.4 496.9h3.800V571h-3.800zM507.8 496.7h3.800V571h-3.800zM540.2 496.5h3.800V571h-3.800zM572.7 496.3h3.800V571h-3.800zM605.2 496.1h3.800V571h-3.800zM637.6 495.9h3.800V571h-3.800zM670 495.7h3.800V571h-3.800zM702.5 495.5h3.800V571h-3.800zM735 495.3h3.800V571h-3.800zM767.4 495.1h3.800V571h-3.800zM799.9 494.9h3.800V571h-3.800zM832.3 494.7h3.800V571h-3.800zM864.8 494.5h3.800V571h-3.800zM897.2 494.3h3.800V571h-3.800zM929.7 494.1h3.800V571h-3.800zM962.1 493.9h3.800V571h-3.800zM994.6 493.7h3.800V571h-3.800zM1027 493.5h3.800V571h-3.800zM1059.5 493.3h3.800V571h-3.800zM1091.9 493.1h3.800V571h-3.800zM1124.3 492.9h3.800V571h-3.800zM1156.8 492.7h3.800V571h-3.800zM1189.2 492.5h3.800V571h-3.800zM1221.7 492.3h3.800V571h-3.800zM1254.2 492.1h3.800V571h-3.800zM1286.6 491.9h3.800V571h-3.800zM1319.1 491.7h3.800V571h-3.800zM1351.5 491.5h3.800V571h-3.800z" fill="url(#gfs)"/>
<path d="M345.6 452h12.900V478.2h-12.900zM378 452h12.900V478.1h-12.900zM410.4 452h12.900V478h-12.900zM442.9 452h12.900V477.9h-12.900zM475.4 452h12.900V477.8h-12.900zM507.8 452h12.900V477.7h-12.900zM540.2 452h12.900V477.6h-12.900zM572.7 452h12.900V477.5h-12.900zM605.2 452h12.900V477.4h-12.900zM637.6 452h12.900V477.3h-12.900zM670 452h12.900V477.2h-12.900zM702.5 452h12.900V477.1h-12.900zM735 452h12.900V477h-12.900zM767.4 452h12.900V476.9h-12.900zM799.9 452h12.900V476.8h-12.900zM832.3 452h12.900V476.7h-12.900zM864.8 452h12.900V476.7h-12.900zM897.2 452h12.900V476.6h-12.900zM929.7 452h12.900V476.5h-12.900zM962.1 452h12.900V476.4h-12.900zM994.6 452h12.900V476.3h-12.900zM1027 452h12.900V476.2h-12.900zM1059.5 452h12.900V476.1h-12.900zM1091.9 452h12.900V476h-12.900zM1124.3 452h12.900V475.9h-12.900zM1156.8 452h12.900V475.8h-12.900zM1189.2 452h12.900V475.7h-12.900zM1221.7 452h12.900V475.6h-12.900zM1254.2 452h12.900V475.5h-12.900zM1286.6 452h12.900V475.4h-12.900zM1319.1 452h12.900V475.3h-12.900zM1351.5 452h12.900V475.2h-12.900z" fill="#efe4fb"/><path d="M345.6 452h2.600V478.2h-2.600zM378 452h2.600V478.1h-2.600zM410.4 452h2.600V478h-2.600zM442.9 452h2.600V477.9h-2.600zM475.4 452h2.600V477.8h-2.600zM507.8 452h2.600V477.7h-2.600zM540.2 452h2.600V477.6h-2.600zM572.7 452h2.600V477.5h-2.600zM605.2 452h2.600V477.4h-2.600zM637.6 452h2.600V477.3h-2.600zM670 452h2.600V477.2h-2.600zM702.5 452h2.600V477.1h-2.600zM735 452h2.600V477h-2.600zM767.4 452h2.600V476.9h-2.600zM799.9 452h2.600V476.8h-2.600zM832.3 452h2.600V476.7h-2.600zM864.8 452h2.600V476.7h-2.600zM897.2 452h2.600V476.6h-2.600zM929.7 452h2.600V476.5h-2.600zM962.1 452h2.600V476.4h-2.600zM994.6 452h2.600V476.3h-2.600zM1027 452h2.600V476.2h-2.600zM1059.5 452h2.600V476.1h-2.600zM1091.9 452h2.600V476h-2.600zM1124.3 452h2.600V475.9h-2.600zM1156.8 452h2.600V475.8h-2.600zM1189.2 452h2.600V475.7h-2.600zM1221.7 452h2.600V475.6h-2.600zM1254.2 452h2.600V475.5h-2.600zM1286.6 452h2.600V475.4h-2.600zM1319.1 452h2.600V475.3h-2.600zM1351.5 452h2.600V475.2h-2.600z" fill="#e3d3f5"/>
<path d="M368 478.1L1347 475.2V482L368 489z" fill="#fdfeff"/>
<path d="M368 489L1347 482V484.3L368 490.8z" fill="#dfcde6"/>
<path d="M345.6 490.7h12.900V497.9h-10.200zM378 490.5h12.900V497.7h-10.200zM410.4 490.3h12.900V497.5h-10.200zM442.9 490.1h12.900V497.3h-10.200zM475.4 489.9h12.900V497.1h-10.200zM507.8 489.6h12.900V496.9h-10.200zM540.2 489.4h12.900V496.7h-10.200zM572.7 489.2h12.900V496.5h-10.200zM605.2 489h12.900V496.3h-10.200zM637.6 488.8h12.900V496.1h-10.200zM670 488.6h12.900V495.9h-10.200zM702.5 488.4h12.900V495.7h-10.200zM735 488.2h12.900V495.5h-10.200zM767.4 487.9h12.900V495.3h-10.200zM799.9 487.7h12.900V495.1h-10.200zM832.3 487.5h12.900V494.9h-10.200zM864.8 487.3h12.900V494.7h-10.200zM897.2 487.1h12.900V494.5h-10.200zM929.7 486.9h12.900V494.3h-10.200zM962.1 486.7h12.900V494.1h-10.200zM994.6 486.4h12.900V493.9h-10.200zM1027 486.2h12.900V493.7h-10.200zM1059.5 486h12.900V493.5h-10.200zM1091.9 485.8h12.900V493.3h-10.200zM1124.3 485.6h12.900V493.1h-10.200zM1156.8 485.4h12.900V492.9h-10.200zM1189.2 485.2h12.900V492.7h-10.200zM1221.7 484.9h12.900V492.5h-10.200zM1254.2 484.7h12.900V492.3h-10.200zM1286.6 484.5h12.900V492.1h-10.200zM1319.1 484.3h12.900V491.9h-10.200zM1351.5 484.1h12.900V491.7h-10.200z" fill="#d2bce1"/>
<circle cx="504.5" cy="377" r="5" fill="#fff" opacity="0.5"/>
<circle cx="576.5" cy="537" r="4.5" fill="#fff" opacity="0.6"/>
<circle cx="966" cy="523" r="3.5" fill="#fff" opacity="0.5"/>
<circle cx="1076" cy="525" r="3" fill="#fff" opacity="0.5"/>
<circle cx="1105" cy="555" r="4.5" fill="#fff" opacity="0.7"/>
<circle cx="1011" cy="564" r="4" fill="#fff" opacity="0.4"/>
<rect x="368" y="569" width="979" height="73" fill="#bdaf2c"/>
<path d="M368 589.5L900 588.5L1347 589L1347 590.5L900 590.3L368 591.5z" fill="#a99c28"/>
<path d="M368 595L426.7 625L680 625L846.7 629L1000 632L1347 631L1347 642L368 642z" fill="#978a25"/>
<path d="M680 616.5L1000 608.5L1347 599L1347 601L1000 611L680 620.5L560 623L560 621.5z" fill="#a4972a"/>
<path d="M701 583L757 583L720 600L680 621.7L640 642L601.7 642L640 620L680 596.7z" fill="#8f8526"/>
<path d="M1181.9 580.3L1217.5 580.3L1190 596L1165 614L1152 628L1146 642L1129 642L1136 627L1150 609L1168 592z" fill="#8f8526"/>
<path d="M1000 642C1000 642 1005.3 638.3 1012 637C1018.7 635.7 1030.3 634.8 1040 634C1049.7 633.2 1062.7 632.5 1070 632.5C1077.3 632.5 1080.8 632.4 1084 634C1087.2 635.6 1089 642 1089 642L1000 642z" fill="#837a22"/>
<path d="M1090 642L1130 632L1136 627L1130 642z" fill="#837a22"/>
<path d="M559 582.3L565.6 580.1L581 580.5L574.4 582.6z" fill="#e8681c"/>
<path d="M594 594.6L595.8 592.4L600 592.8L598.2 594.9z" fill="#e8681c"/>
<path d="M658 623L663.7 620.5L677 620.9L671.3 623.2z" fill="#e8681c"/>
<path d="M601.7 632.1L605.1 629.9L613 630.3L609.6 632.4z" fill="#e8681c"/>
<path d="M761.7 606.1L765.7 603.9L775 604.3L771 606.4z" fill="#e8681c"/>
<path d="M928 631.1L930.9 628.9L937.5 629.3L934.6 631.4z" fill="#e8681c"/>
<path d="M963 625.8L964.4 623.6L967.5 624L966.1 626.1z" fill="#e8681c"/>
<path d="M1015 588.9L1017 586.7L1021.6 587.1L1019.6 589.2z" fill="#e8681c"/>
<path d="M1084 591.7L1088.5 589.5L1099 589.9L1094.5 592z" fill="#e8681c"/>
<path d="M1112.5 600.5L1118 597.5L1131 597.9L1125.5 600.8z" fill="#e8681c"/>
<path d="M1140.6 591.1L1143.4 588.9L1150 589.3L1147.2 591.4z" fill="#e8681c"/>
<path d="M1189 606.3L1194.7 603.3L1208 603.7L1202.3 606.6z" fill="#e8681c"/>
<path d="M1249 582L1254.7 579L1268 579.4L1262.3 582.3z" fill="#e8681c"/>
<path d="M1281 599.6L1284.9 597.4L1294 597.8L1290.1 599.9z" fill="#e8681c"/>
<path d="M1217.5 628.9L1220.3 626.7L1227 627.1L1224.2 629.2z" fill="#e8681c"/>
<path d="M765 586.3L768.8 583.7L777.5 584.1L773.8 586.6z" fill="#e6c22b"/>
<path d="M786.7 606.1L789.2 603.9L795 604.3L792.5 606.4z" fill="#e6c22b"/>
<path d="M806.7 601.1L808.7 598.9L813.3 599.3L811.3 601.4z" fill="#e6c22b"/>
<path d="M756.7 628.2L760.9 624.8L770.8 625.2L766.6 628.5z" fill="#e6c22b"/>
<path d="M948 626.5L952.1 623.5L961.7 623.9L957.6 626.8z" fill="#e6c22b"/>
<path d="M1084 610.5L1088 608.3L1097.5 608.7L1093.5 610.8z" fill="#e6c22b"/>
<path d="M1138.8 609.5L1141 607.3L1146 607.7L1143.8 609.8z" fill="#e6c22b"/>
<path d="M1204 611.4L1208 609.2L1217.5 609.6L1213.5 611.7z" fill="#e6c22b"/>
<path d="M1247.5 584.1L1250.3 581.9L1257 582.3L1254.2 584.4z" fill="#e6c22b"/>
<path d="M1294 590.8L1297.5 588.6L1305.6 589L1302.1 591.1z" fill="#e6c22b"/>
<path d="M1268 601.1L1270.8 598.9L1277.5 599.3L1274.7 601.4z" fill="#e6c22b"/>
<path d="M1251 626.8L1254.2 623.8L1261.6 624.2L1258.4 627.1z" fill="#e6c22b"/>
<path d="M690 610L693.6 608L702 608.4L698.4 610.3z" fill="#e8681c"/>
<path d="M742 613L745 611L752 611.4L749 613.3z" fill="#e6c22b"/>
<path d="M637.4 590.7L639.1 588.9L643 589.3L641.4 591z" fill="#e6c22b"/>
<path d="M667.3 590L668.9 588.2L672.6 588.6L671 590.3z" fill="#e6c22b"/>
<path d="M620.2 594.1L621.2 592.3L623.5 592.7L622.5 594.4z" fill="#e6c22b"/>
<path d="M651.1 589.6L652.6 587.8L656.3 588.2L654.7 589.9z" fill="#e6c22b"/>
<path d="M655.8 595.9L656.8 594.1L659.1 594.5L658.1 596.2z" fill="#8a7a22"/>
<path d="M621 591.6L622.5 589.8L626.2 590.2L624.6 591.9z" fill="#e6c22b"/>
<path d="M635.4 590.6L636.4 588.8L638.8 589.2L637.8 590.9z" fill="#d8b428"/>
<path d="M651.6 597.1L652.6 595.3L655 595.7L654 597.4z" fill="#e6c22b"/>
<path d="M640.3 595.5L641.3 593.7L643.6 594.1L642.6 595.8z" fill="#e6c22b"/>
<path d="M655.1 594.9L656.7 593.1L660.3 593.5L658.7 595.2z" fill="#d8b428"/>
<path d="M645.9 600L647.3 598.2L650.4 598.6L649 600.3z" fill="#e6c22b"/>
<path d="M665.7 597.3L666.9 595.5L669.6 595.9L668.4 597.6z" fill="#d8b428"/>
<path d="M649.5 599.4L651.3 597.6L655.4 598L653.7 599.7z" fill="#d8b428"/>
<path d="M654.5 589.8L656.1 588L659.6 588.4L658.1 590.1z" fill="#e6c22b"/>
<path d="M1084.4 588.6L1085.9 586.8L1089.4 587.2L1087.9 588.9z" fill="#e6c22b"/>
<path d="M1095.9 588L1097.4 586.2L1101.1 586.6L1099.5 588.3z" fill="#d8b428"/>
<path d="M1061 590.2L1062.5 588.4L1066 588.8L1064.5 590.5z" fill="#8a7a22"/>
<path d="M1045.9 588.1L1047.1 586.3L1049.9 586.7L1048.7 588.4z" fill="#e6c22b"/>
<path d="M1045.4 593L1047.1 591.2L1051 591.6L1049.3 593.3z" fill="#8a7a22"/>
<path d="M1057.9 590.5L1059.6 588.7L1063.6 589.1L1061.9 590.8z" fill="#e6c22b"/>
<path d="M1094.7 590.2L1096.3 588.4L1100.1 588.8L1098.5 590.5z" fill="#8a7a22"/>
<path d="M1045.3 593.5L1046.4 591.7L1048.8 592.1L1047.8 593.8z" fill="#e6c22b"/>
<path d="M1064.3 594.7L1065.8 592.9L1069.3 593.3L1067.8 595z" fill="#e6c22b"/>
<path d="M1067.2 591.8L1069.1 590L1073.7 590.4L1071.7 592.1z" fill="#8a7a22"/>
<path d="M1090.4 589.6L1091.8 587.8L1095 588.2L1093.6 589.9z" fill="#d8b428"/>
<path d="M1080.2 590.4L1081.4 588.6L1084.2 589L1083 590.7z" fill="#e6c22b"/>
<path d="M1051.9 589.3L1053 587.5L1055.8 587.9L1054.6 589.6z" fill="#8a7a22"/>
<path d="M1088.5 588.9L1089.8 587.1L1092.7 587.5L1091.4 589.2z" fill="#e6c22b"/>
<path d="M1164.8 601.3L1166.3 599.5L1170 599.9L1168.4 601.6z" fill="#e6c22b"/>
<path d="M1175.6 603.1L1177.3 601.3L1181.1 601.7L1179.4 603.4z" fill="#e6c22b"/>
<path d="M1166.3 607.4L1168.3 605.6L1173.1 606L1171 607.7z" fill="#8a7a22"/>
<path d="M1163.9 601.6L1165.4 599.8L1168.8 600.2L1167.4 601.9z" fill="#8a7a22"/>
<path d="M1150.5 597.7L1151.6 595.9L1154.3 596.3L1153.2 598z" fill="#e6c22b"/>
<path d="M1152.4 604.1L1153.4 602.3L1155.8 602.7L1154.8 604.4z" fill="#e6c22b"/>
<path d="M1169.5 608.3L1171.1 606.5L1174.9 606.9L1173.3 608.6z" fill="#e6c22b"/>
<path d="M1183 604.3L1184.1 602.5L1186.6 602.9L1185.5 604.6z" fill="#d8b428"/>
<path d="M1186.2 604.1L1187.7 602.3L1191.1 602.7L1189.6 604.4z" fill="#e6c22b"/>
<path d="M1182 608.8L1183.4 607L1186.8 607.4L1185.4 609.1z" fill="#8a7a22"/>
<path d="M1160.5 598.6L1162.3 596.8L1166.5 597.2L1164.7 598.9z" fill="#d8b428"/>
<path d="M1167.1 605.2L1168.7 603.4L1172.2 603.8L1170.7 605.5z" fill="#e6c22b"/>
<path d="M1164 598.1L1165.1 596.3L1167.6 596.7L1166.5 598.4z" fill="#e6c22b"/>
<path d="M1160.2 596.7L1161.8 594.9L1165.7 595.3L1164.1 597z" fill="#e6c22b"/>
<path d="M1158.9 596.5L1160.3 594.7L1163.4 595.1L1162.1 596.8z" fill="#e6c22b"/>
<path d="M1152.1 596.2L1153.7 594.4L1157.3 594.8L1155.7 596.5z" fill="#d8b428"/>
<path d="M1157.7 598.6L1159.6 596.8L1163.9 597.2L1162 598.9z" fill="#e6c22b"/>
<path d="M375.9 570.4C375.9 570.4 378.3 567.9 380.5 567.5C382.7 567.1 386.8 567.6 388.8 567.9C390.8 568.2 392.6 569.2 392.6 569.2L396.3 553.3L395.9 561.7C395.9 561.7 396.3 562.5 397.2 560.8C398.1 559.2 399.7 554 401.3 551.7C403 549.3 404.9 547.8 407.2 546.7C409.4 545.6 412.2 545.1 414.7 545C417.2 544.9 420.2 545.4 422.2 546.2C424.1 547.1 426.3 550 426.3 550L429.2 548.3L426.8 559.2C426.8 559.2 426.7 559.4 428 557.5C429.3 555.6 432.2 550.6 434.7 547.5C437.2 544.4 440.2 541.1 443 539.2C445.8 537.2 447.9 536.5 451.3 535.8C454.8 535.1 459.7 534.9 463.8 535C468 535.1 472.9 535.4 476.3 536.7C479.8 537.9 481.9 540.3 484.7 542.5C487.4 544.7 490.2 547.2 493 550C495.8 552.8 498.6 555.8 501.3 559.2C504.1 562.6 509.7 570.4 509.7 570.4L375.9 570.4z" fill="url(#gob2)"/>
<path d="M397.2 560.8C397.9 558.8 399.7 554 401.3 551.7C403 549.3 404.9 547.8 407.2 546.7C409.4 545.6 412.2 545.1 414.7 545C417.2 544.9 420.2 545.6 422.2 546.2C424.1 546.9 426.3 548.8 426.3 548.8C426.3 548.8 423.3 553.3 421.3 555C419.4 556.7 417.2 557.9 414.7 559.2C412.2 560.4 409.2 561.7 406.3 562.5C403.4 563.3 397.2 563.8 397.2 563.8C397.2 563.8 396.5 562.8 397.2 560.8z" fill="#f0c22c"/>
<path d="M426.3 560C426.3 560 429.5 555.7 431.3 553.3C433.1 551 435.2 548.2 437.2 545.8C439.1 543.5 440.6 540.8 443 539.2C445.4 537.5 447.9 536.5 451.3 535.8C454.8 535.1 459.9 534.9 463.8 535C467.7 535.1 471.5 535.1 474.7 536.2C477.9 537.4 483 541.7 483 541.7C483 541.7 479.5 546.1 476.3 548.3C473.1 550.6 468 553.2 463.8 555C459.7 556.8 455.5 558.1 451.3 559.2C447.2 560.3 443 561.2 438.8 561.7C434.7 562.2 426.3 562.1 426.3 562.1L426.3 560z" fill="#f0c22c"/>
<path d="M441.3 568.8C441.3 568.8 444.8 565.8 447.2 565C449.5 564.2 452.7 563.9 455.5 563.8C458.3 563.6 461.3 563.8 463.8 564.2C466.3 564.5 470.5 565.8 470.5 565.8C470.5 565.8 463.1 567.4 459.7 567.9C456.2 568.5 452.7 569 449.7 569.2C446.6 569.3 441.3 568.8 441.3 568.8z" fill="#f0c22c"/>
<path d="M470.5 558.8C470.5 558.8 476.5 554.9 478.8 553.3C481.2 551.7 484.7 549.2 484.7 549.2C484.7 549.2 484.1 553.6 483 555C481.9 556.4 480.1 556.9 478 557.5C475.9 558.1 470.5 558.8 470.5 558.8z" fill="#f0c22c"/>
<path d="M459.7 528.3C459.8 528.1 463 528.4 464.7 529C466.3 529.6 469.8 531.4 469.7 531.7C469.5 531.9 465.5 531.2 463.8 530.7C462.2 530.1 459.5 528.6 459.7 528.3z" fill="#f2c52e"/>
<path d="M397.2 548.3C397 548.2 398.1 545.6 398.8 544.6C399.5 543.5 401.1 541.9 401.3 542.1C401.5 542.2 400.8 544.4 400.1 545.4C399.4 546.5 397.4 548.5 397.2 548.3z" fill="#f2c52e"/>
<path d="M1256.9 569C1256.9 569 1261.7 561 1265 558C1268.3 555 1273 552.5 1277 551C1281 549.5 1285 548.9 1288.8 549C1292.6 549.1 1296.5 550 1300 551.5C1303.5 553 1306.9 555.1 1310 558C1313.1 560.9 1318.8 569 1318.8 569L1256.9 569z" fill="url(#gob)"/>
<path d="M1262 566C1264.5 564.5 1276.7 559.8 1285 559C1293.3 558.2 1311.2 560.3 1312 561C1312.8 561.7 1297 561.8 1290 563C1283 564.2 1274.7 567.5 1270 568C1265.3 568.5 1259.5 567.5 1262 566z" fill="#e58e1f" opacity=".8"/>
<path d="M1316 569C1316 569 1322 566 1325 565.5C1328 565 1331.5 565.4 1334 566C1336.5 566.6 1340 569 1340 569L1316 569z" fill="#efb72a"/>
<path d="M1306 553L1320 565L1310 566z" fill="#eba927"/>
<path d="M689.5 215L691 240L695 260L697 295L699.7 324.9L699 350.8L696.5 372L695.8 383.2L712 383.2L707.4 367.7L708 350.8L707.4 324.9L703.5 295L699.7 260L697 240L694.6 215z" fill="#5e2c24"/>
<path d="M660.5 218L664 250L667.9 260L670.5 286L671 290.5L679 296.3L697 307L697.5 296L677.6 287.2L674 275L671.1 260L667 245L663.8 218z" fill="#5e2c24"/>
<path d="M707.4 367.7L730.8 350.8L751.5 332.6L752.8 322.3L742.5 289.8L743.1 273L743.8 260L741.7 210L745.5 210L746.4 260L747 276.9L750.2 291.1L756.7 302.8L762.6 320.3L808.6 309.3L826.8 292.4L846.2 278.8L847.5 280.5L829.4 295L809.9 311.9L767.8 323.6L764.5 323.6L756.7 332.6L743.8 349.5L723 370.2L712 383.2L703 380z" fill="#5e2c24"/>
<path d="M698.3 366.7C696.5 368.1 697.1 370.3 696.7 375C696.3 379.7 695.4 388.6 695.8 395C696.2 401.4 698.8 406.4 699.2 413.3C699.6 420.2 699 428.6 698.3 436.7C697.6 444.8 696.2 454.5 695 461.7C693.8 468.9 692.5 472.8 690.8 480C689.1 487.2 686.2 498.1 685 505C683.8 511.9 682.5 515.6 683.3 521.7C684.1 527.8 687.5 534.8 690 541.7C692.5 548.6 696.3 556.4 698.3 563.3C700.2 570.2 701.7 583 701.7 583L756.7 583C756.7 583 752 567.2 750 560C748 552.8 746.1 544.6 745 540C743.9 535.4 743.3 532.5 743.3 532.5C743.3 532.5 726.7 526 721.7 521.7C716.7 517.4 715 513.6 713.3 506.7C711.6 499.8 712.1 488.9 711.7 480C711.3 471.1 710.8 463.3 710.8 453.3C710.8 443.3 711.3 429.2 711.7 420C712.1 410.8 713.4 404.6 713.3 398.3C713.1 392.1 711.8 387.8 710.8 382.5C709.8 377.2 709.6 369.3 707.5 366.7C705.4 364.1 700.1 365.3 698.3 366.7z" fill="url(#gtr)"/>
<path d="M707.4 367.7C709.6 372.9 711 378.1 712 383.2C713 388.3 713.3 392.2 713.3 398.3C713.2 404.4 712.1 410.8 711.7 420C711.3 429.2 710.8 443.3 710.8 453.3C710.8 463.3 711.3 471.1 711.7 480C712.1 488.9 711.6 499.8 713.3 506.7C715 513.6 716.7 517.4 721.7 521.7C726.7 526 743.3 532.5 743.3 532.5C743.3 532.5 747.8 551.6 750 560C752.2 568.4 756.7 583 756.7 583L735 583C735 583 732.5 560.8 730 552C727.5 543.2 723.5 536.7 720 530C716.5 523.3 711.1 520.3 709 512C706.9 503.7 707.8 492 707.5 480C707.2 468 707.2 452.5 707.5 440C707.8 427.5 709.2 414.2 709 405C708.8 395.8 707.7 393.8 706 385C704.3 376.2 698.8 354.9 699 352C699.2 349.1 705.2 362.5 707.4 367.7z" fill="#63291a"/>
<path d="M690.8 480C688 483.8 686.2 498.1 685 505C683.8 511.9 682.5 515.6 683.3 521.7C684.1 527.8 687.5 534.8 690 541.7C692.5 548.6 696.3 556.4 698.3 563.3C700.2 570.2 701.7 583 701.7 583L712 583C712 583 704.3 563.8 702 555C699.7 546.2 698.3 538.3 698 530C697.7 521.7 699.3 513 700 505C700.7 497 703.5 486.2 702 482C700.5 477.8 693.6 476.2 690.8 480z" fill="url(#gtl)"/>
<path d="M702 519L713 512L721 523L720 548L711 561L702 550z" fill="#b06a2c"/>
<path d="M700 395L706 380L703 420L698 440z" fill="#7a3d24"/>
<path d="M435.8 153C435.8 153 437.1 163.2 438.3 168.3C439.6 173.4 440.8 177.5 443.3 183.3C445.8 189.1 449.4 197.2 453.3 203.3C457.2 209.4 462.5 215.6 466.7 220C470.9 224.4 478.3 230 478.3 230L482.8 247.5L485 236.7C485 236.7 494.8 247 501.7 251.7C508.6 256.4 518.4 261.4 526.7 265C535 268.6 543.4 270.8 551.7 273.3C560 275.8 568.4 278.1 576.7 280C585 281.9 594.2 283.8 601.7 285C609.2 286.2 621.7 287 621.7 287L606.7 298.3C606.7 298.3 625 293.6 633.3 288.3C641.6 283 650.6 271.1 656.7 266.7C662.8 262.3 666.1 263 670 261.7C673.9 260.4 672.8 257.9 680 259C687.2 260.1 702.2 265.8 713.3 268.3C724.4 270.8 738.1 273.1 746.7 274.2C755.3 275.3 765 275 765 275L760.8 265C760.8 265 771.2 267.8 780 271.7C788.8 275.6 805 284.1 813.3 288.3C821.6 292.5 824.7 294.2 830 296.7C835.3 299.2 845 303.3 845 303.3L821.7 302.5C821.7 302.5 834.5 305.7 840 306.5C845.5 307.3 848.3 307.7 855 307.5C861.7 307.3 873 306.3 880 305.5C887 304.7 896.7 302.5 896.7 302.5L921.7 300L893.3 299C893.3 299 912.8 289.8 921.7 285C930.6 280.2 940 273.2 946.7 270C953.4 266.8 961.7 265.8 961.7 265.8L963.3 256.7C963.3 256.7 976.9 249.6 983 246C989.1 242.4 995.9 239.4 1000 235C1004.1 230.6 1004.4 227.3 1007.5 219.4C1010.6 211.5 1015.2 198.6 1018.8 187.5C1022.4 176.4 1029 153 1029 153L435.8 153z" fill="url(#gco)"/>
<path d="M437 153C437 153 438.7 164.7 440 170C441.3 175.3 443.3 180.3 445 185C446.7 189.7 446.4 193.9 450 198.3C453.6 202.8 459.5 208.1 466.7 211.7C473.9 215.3 484.7 218.1 493.3 220C501.9 221.9 509.7 222.9 518.3 223.3C526.9 223.7 545 222.5 545 222.5L536.7 218.7C536.7 218.7 547.8 219.2 560 218.3C572.2 217.4 592 215.8 610 213.3C628 210.8 656.6 205.5 668.3 203.3C680 201.1 673.9 201.7 680 200C686.1 198.3 697.5 195.6 705 193.3C712.5 191.1 725 186.5 725 186.5C725 186.5 722 180.8 720 178C718 175.2 717 174.2 713.3 170C709.6 165.8 698 153 698 153L437 153z" fill="url(#gla)"/>
<path d="M740.8 153C740.8 153 737.9 161.6 738.3 166.7C738.7 171.8 740.5 177.8 743.3 183.3C746.1 188.9 750 193.9 755 200C760 206.1 766.3 214.2 773.3 220C780.2 225.8 788.6 230.8 796.7 235C804.8 239.2 813.4 242.4 821.7 245C830 247.6 840.8 249.6 846.7 250.8C852.6 252.1 857 252.5 857 252.5C857 252.5 855.2 243.2 851.7 240C848.2 236.8 835.8 233.3 835.8 233.3C835.8 233.3 854.3 235.1 863.3 235C872.3 234.9 890 232.5 890 232.5L911.7 201.7L935 166.7L929 153L740.8 153z" fill="url(#glb)"/>
<path d="M546.7 255.8C546.7 255.8 566.2 247.3 576.7 243.3C587.2 239.3 598.9 235 610 231.7C621.1 228.4 631.6 225.4 643.3 223.3C655 221.2 665.5 220.2 680 219C694.5 217.8 730 215.8 730 215.8L728.3 205.8C728.3 205.8 735.3 208.8 741.7 212.5C748.1 216.2 756.4 221.2 766.7 228.3C777 235.4 792.8 248.6 803.3 255C813.8 261.4 822.8 262.2 830 266.7C837.2 271.1 841 275.9 846.7 281.7C852.4 287.5 864 301.7 864 301.7L856.7 307.5C856.7 307.5 849.5 305.1 845 303.3C840.5 301.5 835.3 299.2 830 296.7C824.7 294.2 821.6 292.5 813.3 288.3C805 284.1 788.8 275.6 780 271.7C771.2 267.8 760.8 265 760.8 265L765 275C765 275 755.3 275.3 746.7 274.2C738.1 273.1 724.4 270.8 713.3 268.3C702.2 265.8 687.2 260.1 680 259C672.8 257.9 673.9 260.4 670 261.7C666.1 263 662.8 262.3 656.7 266.7C650.6 271.1 641.6 283 633.3 288.3C625 293.6 606.7 298.3 606.7 298.3L621.7 287C621.7 287 609.2 286.4 601.7 285C594.2 283.6 583.7 281.1 576.7 278.3C569.8 275.5 565 272.1 560 268.3C555 264.6 546.7 255.8 546.7 255.8z" fill="url(#gbr)"/>
<path d="M821.7 302.5C821.7 302.5 834.2 305.7 840 306.5C845.8 307.3 850 307.7 856.7 307.5C863.4 307.3 873.3 306.3 880 305.5C886.7 304.7 896.7 302.5 896.7 302.5L921.7 300C921.7 300 901.9 298.5 893.3 299C884.7 299.5 878 302.3 870 303C862 303.7 845 303.3 845 303.3L821.7 302.5z" fill="#67290b"/>
<path d="M815 303L826.8 292.4L846.2 278.8L847.5 280.5L829.4 295L818 305.5z" fill="#5a2a28"/>
<path d="M815 287L825 292.6L827 300L821.6 296.5z" fill="#8b97f9"/>
<path d="M692 219L694.6 262" stroke="#5a2a28" stroke-width="3.6" fill="none" stroke-linecap="round" stroke-linejoin="round"/>
<path d="M743.6 213L745.5 264" stroke="#5a2a28" stroke-width="3.4" fill="none" stroke-linecap="round" stroke-linejoin="round"/>
<path d="M661.5 222L665.5 262" stroke="#5a2a28" stroke-width="2.6" fill="none" stroke-linecap="round" stroke-linejoin="round"/>
<path d="M452.500 174Q463 190 490 197.500Q466 203 452.500 174z" fill="#f2c531"/>
<path d="M497 182.500Q517 189 540.500 188.500Q515 194.500 497 182.500z" fill="#f2c531"/>
<path d="M448 212.500Q443 230 452.500 246Q452.500 228 448 212.500z" fill="#f2c531"/>
<path d="M639 222Q664 212 686.500 192.500Q677 219 639 222z" fill="#f2c531"/>
<path d="M571 294.500Q595 304 620.500 308Q590 312 571 294.500z" fill="#f2c531"/>
<path d="M903.3 182.500Q921 193 924.500 206.700Q926 217 921.700 227.500Q914 203 903.3 182.500z" fill="#f2c531"/>
<path d="M902.500 281.500Q913 285 923.500 288.500Q910 291 902.500 281.500z" fill="#f2c531"/>
<path d="M1183.3 361.1L1192 386" stroke="#5b2a22" stroke-width="2.6" fill="none" stroke-linecap="round" stroke-linejoin="round"/>
<path d="M1215.6 361.7L1198.5 386.5" stroke="#5b2a22" stroke-width="2.6" fill="none" stroke-linecap="round" stroke-linejoin="round"/>
<path d="M1191 386C1189.4 386.8 1190.7 388.3 1192.2 391.7C1193.7 395.1 1197 401.1 1200 406.1C1203 411.1 1207.8 417.6 1210 421.7C1212.2 425.8 1213.3 426.9 1213.3 430.6C1213.3 434.3 1211.7 439.8 1210 443.9C1208.3 448 1205.7 452.7 1203.3 455C1200.9 457.3 1195.6 457.8 1195.6 457.8C1195.6 457.8 1192.4 463.2 1192.2 466.1C1192 469 1194.2 469.7 1194.4 475C1194.6 480.3 1193.9 490.3 1193.1 498.1C1192.3 505.9 1190.8 512.5 1189.4 522C1188.1 531.5 1186.2 545.3 1185 555C1183.8 564.7 1181.9 580.3 1181.9 580.3L1217.5 580.3C1217.5 580.3 1214.2 559.7 1213 550C1211.8 540.3 1210.7 530.7 1210 522C1209.3 513.3 1208.5 505.8 1209 498C1209.5 490.2 1211.6 482.2 1213.3 475C1215 467.8 1216.9 460.9 1218.9 455C1221 449.1 1224.3 444.2 1225.6 439.4C1226.9 434.6 1226.7 426.1 1226.7 426.1C1226.7 426.1 1222.1 421.3 1218.9 417.2C1215.8 413.1 1210.6 406.7 1207.8 401.7C1205 396.7 1204.8 389.6 1202 387C1199.2 384.4 1192.6 385.2 1191 386z" fill="url(#grt)"/>
<path d="M1197.5 388.3C1197.4 386.9 1200.8 386.2 1202 387.8C1203.2 389.4 1205.8 398.3 1207.8 401.7C1209.8 405.1 1216.7 414.4 1218.9 417.2C1221.1 420 1226.7 426.1 1226.7 426.1C1226.7 426.1 1226.5 436 1225.6 439.4C1224.7 442.8 1220.3 450.8 1218.9 455C1217.5 459.2 1214.7 472.7 1213.3 475C1211.9 477.3 1207.8 476.3 1207 475C1206.2 473.7 1205.5 466.9 1206.5 463.9C1207.5 460.9 1213.9 452.7 1215.5 449.4C1217.1 446.1 1219.6 438.6 1220 436C1220.4 433.4 1220.4 429.8 1219.2 427C1218 424.2 1211.6 414.8 1209.7 411.6C1207.8 408.4 1203.9 402.1 1202.5 399.4C1201.1 396.7 1197.6 389.7 1197.5 388.3z" fill="#8b4a36"/>
<path d="M1193.1 498.1C1191.7 502.1 1190.8 512.5 1189.4 522C1188.1 531.5 1186.2 545.3 1185 555C1183.8 564.7 1181.9 580.3 1181.9 580.3L1190 580.3C1190 580.3 1192 560 1193 550C1194 540 1195.2 528.7 1196 520C1196.8 511.3 1198.5 501.6 1198 498C1197.5 494.4 1194.5 494.1 1193.1 498.1z" fill="#5f2818"/>
<path d="M1200 490L1203 520L1200 545L1204 578" stroke="#6e3318" stroke-width="1.2" fill="none" stroke-linecap="round" stroke-linejoin="round"/>
<path d="M1195.6 457.8L1185 451L1174.4 446.1L1175.6 432.8L1174.8 427" stroke="#5b2a22" stroke-width="2" fill="none" stroke-linecap="round" stroke-linejoin="round"/>
<path d="M1240 258C1240 258 1217.9 266.1 1206 270C1194.1 273.9 1180 276.9 1168.8 281.3C1157.6 285.7 1145 293.2 1138.8 296.3C1132.5 299.4 1133.5 297.2 1131.3 300C1129.1 302.8 1127 308.1 1125.6 313.1C1124.2 318.1 1122.9 325.7 1122.8 330C1122.7 334.3 1123.3 334.2 1124.7 338.8C1126.1 343.4 1128.3 352.5 1131.3 357.5C1134.3 362.5 1139.4 367.2 1142.5 368.8C1145.6 370.4 1146.6 366.6 1150 367C1153.4 367.4 1158 369 1163 371.5C1168 374 1174.7 379.6 1180 382C1185.3 384.4 1190.6 384.8 1195 385.6C1199.4 386.4 1206.3 386.6 1206.3 386.6C1206.3 386.6 1238.8 374.6 1251.3 369.7C1263.8 364.8 1271 362.4 1281.3 357.5C1291.6 352.6 1313.1 340.6 1313.1 340.6C1313.1 340.6 1314.5 334.8 1315 328C1315.5 321.2 1316.1 308.1 1316 300C1315.9 291.9 1314.6 279.4 1314.6 279.4L1309.4 287.8C1309.4 287.8 1297.8 278 1292.5 273.8C1287.2 269.6 1282.5 265.5 1277.5 262.5C1272.5 259.5 1266.9 257.3 1262.5 255.9C1258.1 254.5 1254.8 253.7 1251 254C1247.2 254.3 1240 258 1240 258z" fill="url(#gro)"/>
<path d="M1232.5 261.6C1225.5 264.6 1215 268 1206.3 271.9C1197.5 275.8 1186.1 281.4 1180 285C1173.9 288.6 1169.7 293.4 1169.7 293.4C1169.7 293.4 1162.7 303.9 1159.4 309.4C1156.1 314.9 1151.9 321.6 1150 326.3C1148.1 331 1147.2 334.2 1148.1 337.5C1149 340.8 1149 343.6 1155.6 346.3C1162.2 349 1174.4 352.1 1187.5 353.8C1200.6 355.5 1220.3 356.6 1234.4 356.6C1248.5 356.6 1261 355.8 1271.9 353.8C1282.8 351.8 1293.1 346.6 1300 344.4C1306.9 342.2 1313.1 340.6 1313.1 340.6C1313.1 340.6 1314.5 334.8 1315 328C1315.5 321.2 1316.1 308.1 1316 300C1315.9 291.9 1314.6 279.4 1314.6 279.4L1309.4 287.8C1309.4 287.8 1297.8 278 1292.5 273.8C1287.2 269.6 1282.5 265.5 1277.5 262.5C1272.5 259.5 1267.4 257.3 1262.5 255.9C1257.6 254.5 1253 253.1 1248 254C1243 254.9 1239.5 258.6 1232.5 261.6z" fill="url(#grl)"/>
<path d="M1150 365C1150 365 1175 360.8 1187.5 360.3C1200 359.8 1214.4 360.6 1225 362.2C1235.6 363.8 1251.3 369.7 1251.3 369.7C1251.3 369.7 1216.5 384.1 1206.3 386.6C1196.1 389.2 1196 386.8 1190 385C1184 383.2 1176.7 379.3 1170 376C1163.3 372.7 1150 365 1150 365z" fill="#733810"/>
<path d="M1183.3 361.1L1191.5 384" stroke="#5a2a20" stroke-width="2.4" fill="none" stroke-linecap="round" stroke-linejoin="round"/>
<path d="M1215.6 361.7L1199 385" stroke="#5a2a20" stroke-width="2.4" fill="none" stroke-linecap="round" stroke-linejoin="round"/>
<path d="M1225 252.2C1225 252.2 1234.2 247.5 1238.1 247.5C1242 247.5 1246.2 249.8 1248.4 252.2C1250.6 254.5 1251.3 261.6 1251.3 261.6C1251.3 261.6 1243.2 255.6 1240 255C1236.8 254.4 1232 258 1232 258L1225 252.2z" fill="#e57a1c"/>
<path d="M1270 254Q1290 268 1297.500 290Q1279 274 1270 254z" fill="#ea7d1e"/>
<path d="M1210 321Q1228 322.500 1244 318.500Q1228 327.500 1210 321z" fill="#ea7d1e"/>
<path d="M1309 327Q1319 317 1322 306Q1325.500 320 1309 327z" fill="#ea7d1e"/>
<path d="M1137.500 299.500Q1150 285 1169.500 279.500Q1155 293 1137.500 299.500z" fill="#f2c531"/>
<path d="M1111.6 323.500Q1119 337 1129.500 341Q1113 345.500 1111.6 323.500z" fill="#f2c531"/>
<path d="M1085 396.7C1085 396.7 1089.2 391.4 1092.2 388.3C1095.3 385.3 1097.8 381.1 1103.3 378.3C1108.9 375.6 1118.1 373 1125.6 371.7C1133 370.4 1140.9 370.2 1147.8 370.6C1154.6 370.9 1161.5 372.4 1166.7 373.9C1171.9 375.4 1176.7 376.1 1178.9 379.4C1181.1 382.8 1180.2 388.7 1180 393.9C1179.8 399.1 1178.5 405 1177.8 410.6C1177 416.1 1176.9 422 1175.6 427.2C1174.3 432.4 1172.8 437 1170 441.7C1167.2 446.3 1158.9 455 1158.9 455L1155.6 459.4L1147.8 459.4L1136.7 462.8L1141.1 453.3C1141.1 453.3 1130.9 458.1 1125.6 458.3C1120.2 458.6 1113.9 456.3 1108.9 455C1103.9 453.7 1099.3 452.6 1095.6 450.6C1091.9 448.5 1088.3 446.7 1086.7 442.8C1085 438.9 1085.2 432.6 1085.6 427.2C1085.9 421.9 1087.6 415.4 1088.9 410.6C1090.2 405.7 1093.3 398.3 1093.3 398.3L1085 396.7z" fill="url(#gsc0)"/>
<path d="M1093.3 398.3C1093.3 398.3 1095.6 391.5 1097.8 388.3C1100 385.2 1102 382 1106.7 379.4C1111.3 376.9 1118.7 374.2 1125.6 372.8C1132.4 371.4 1140.9 370.8 1147.8 371.1C1154.6 371.4 1161.6 373 1166.7 374.4C1171.8 375.9 1176.2 376.8 1178.3 380C1180.5 383.2 1180.1 389.9 1179.4 393.9C1178.8 397.9 1176.9 400 1174.4 403.9C1171.9 407.8 1168.9 412 1164.4 417.2C1160 422.4 1153.1 430.6 1147.8 435C1142.4 439.4 1136.3 442 1132.2 443.9C1128.1 445.7 1126.7 446.3 1123.3 446.1C1120 445.9 1115.9 444.6 1112.2 442.8C1108.5 440.9 1104.2 438.1 1101.1 435C1098.1 431.9 1095.4 428 1093.9 423.9C1092.4 419.8 1092.3 414.8 1092.2 410.6C1092.1 406.3 1093.3 398.3 1093.3 398.3z" fill="url(#gsc)"/>
<path d="M1175 410.6C1175 410.6 1168.6 417.2 1164.4 421.7C1160.3 426.1 1153.9 433.3 1150 437.2C1146.1 441.1 1143 442.6 1141.1 445C1139.3 447.4 1138.9 451.7 1138.9 451.7L1141.1 453.3L1136.7 462.8L1147.8 459.4L1155.6 459.4C1155.6 459.4 1156.5 458 1158.9 455C1161.3 452 1167.2 446.3 1170 441.7C1172.8 437 1174.4 432 1175.6 427.2C1176.7 422.4 1177 415.6 1176.9 412.8C1176.8 410 1175 410.6 1175 410.6z" fill="url(#gsd)"/>
<path d="M1085 397Q1088 389 1100 388Q1092 392 1088 399z" fill="#ea7d1e"/>
<path d="M1103 378.500Q1118 374 1137 375Q1118 377.500 1103 378.500z" fill="#ea7d1e"/>
<path d="M1157 368.500Q1164 371 1167 378Q1160 373 1157 368.500z" fill="#ea7d1e"/>
<path d="M1129 416.500Q1137 410 1138.500 402.500Q1141 412 1129 416.500z" fill="#ea7d1e"/>
<path d="M1043 427Q1046 412 1062 410Q1054 420 1043 427z" fill="#f4d72f"/>
<path d="M1095 458Q1106 458 1113.500 454.500Q1107 463 1095 458z" fill="#f4d72f"/>
<path d="M1084 426Q1080.500 436 1086.500 443Q1086 434 1084 426z" fill="#f4d72f"/>
<path d="M899.500 411.500Q895.500 423 903.500 432.500Q903 422 899.500 411.500z" fill="#f4d72f"/>
<path d="M431.500 370.500Q442 381 449.500 391.500Q436 386 431.500 370.500z" fill="#f4d72f"/>
<path d="M481.500 401.500Q488 396 495 397Q489 401 484 404z" fill="#f4d72f"/>
<path d="M616.500 370.500Q612.500 382 622.500 389.500Q620 380 616.500 370.500z" fill="#f4d72f"/>
<path d="M1287 389Q1298 392 1311.500 389.500Q1299 396 1287 389z" fill="#b7b234"/>
<path d="M783.1 573.4L785.2 565.2L795.4 541.8L805.6 534.7L818.8 527L830 518.4L846.3 511.2L862.6 506.1L866.7 512.3L870.2 526.5L869.7 538.7L876.9 553L881.4 561.2L880.9 571.3L876.9 581.5L861.6 585.6L848.3 587.6L845.3 590.7L832 596.8L821.9 595.8L811.7 589.7L798.4 590.7L791.3 584.6L784.2 579.5z" fill="#6b4226"/>
<path d="M783.1 573.4L785.2 565.2L795.4 541.8L805.6 534.7L818.8 527L821.9 527.5L812.7 538.7L806.6 546.9L798.4 563.2L793.3 579.5L791.3 584.6L784.2 579.5z" fill="#c9a274"/>
<path d="M806.6 546.9L812.7 538.7L810.7 551L801.5 569.3L795.4 581.5L793.3 579.5L798.4 563.2z" fill="#deb88c"/>
<path d="M812.7 538.7L815.7 545.9L823.9 545.9L828 541.8L821.9 569.3L820.8 581.5L811.7 589.7L798.4 590.7L791.3 584.6L795.4 581.5L801.5 569.3L810.7 551z" fill="#b98761"/>
<path d="M815.7 548.9L825.9 542.8L820.8 563.2L814.7 575.4L812.7 571.3z" fill="#9a6a48"/>
<path d="M828 541.8L835.1 538.7L830.5 559.1L822.9 579.5L819.8 582.5L821.9 569.3z" fill="#dcae82"/>
<path d="M835.1 538.7L841.2 528L846.3 539.8L845.3 559.1L836.1 575.4L825.9 595.8L821.9 595.8L811.7 589.7L813.7 577.5L819.8 582.5L822.9 579.5L830.5 559.1z" fill="#b27b56"/>
<path d="M818.8 527L830 518.4L846.3 511.2L862.6 506.1L856.5 523.5L851.4 531.6L846.3 539.8L841.2 528L836.1 534.7L830 540.8L823.9 545.9L815.7 545.9L812.7 538.7L821.9 527.5z" fill="#cdaa79"/>
<path d="M830 518.4L846.3 511.2L862.6 506.1L859.5 514.3L846.3 518.4L834.1 524.5L823.9 528.6L818.8 527z" fill="#d6b686"/>
<path d="M845.3 559.1L856.5 555L861.6 569.3L848.3 587.6L845.3 590.7L832 596.8L825.9 595.8L836.1 575.4z" fill="#5a3620"/>
<path d="M864.6 546.9L872.8 559.1L876.9 569.3L866.7 579.5L861.6 569.3z" fill="#7d5236"/>
<path d="M886.5 583L890 579L891 581L888 586z" fill="#8b5a3a"/>
<path d="M749 585Q752 550 766 526Q757.500 556 752.500 585z" fill="#e0d12b"/>
<path d="M754 581Q757 560 764.500 543Q760 562 756.500 581z" fill="#c9a928"/>
<path d="M486.300 555.800Q498 572 498.800 596Q490.500 574 486.300 555.800z" fill="#dccb2c"/>
<path d="M885 545Q891 570 894 596Q900 570 885 545z" fill="#a8901f"/>
<path d="M910.500 561Q899.500 580 900 596Q908 578 910.500 561z" fill="#a8901f"/>
<path d="M701 560Q699.500 572 701 583Q702.500 572 701 560z" fill="#c9b42a"/>
<path d="M1199.700 539.100Q1190 560 1186.600 585Q1193.500 562 1199.700 539.100z" fill="#e0d12b"/>
<path d="M1185.600 541.900Q1178 560 1180 577.500Q1180.500 560 1185.600 541.900z" fill="#b89b25"/>
<path d="M1262.500 642Q1300 614 1347 602.800L1347 607.500Q1305 622 1276 642z" fill="#e3d42f"/>
<path d="M1245.600 642Q1250 620 1256.900 604.700Q1256.500 625 1251 642z" fill="#dccb2c"/>
<path d="M1237.500 627.500Q1238.500 635 1240.500 642L1238 642Q1237 635 1237.500 627.500z" fill="#a07a2a"/>
<path d="M1258 620Q1253 631 1250.500 642L1253 642Q1255 631 1258 620z" fill="#a07a2a"/>
<path d="M1049.700 196.900Q1061 205 1070.900 211L1080.300 201Q1074.500 204.500 1070 206.500Q1059 201.500 1049.700 196.900z" fill="#3b3272"/>
<path d="M1101.800 196Q1103.500 205 1100.300 213.800Q1107 210 1112.500 204.400Q1108.500 206 1105.500 207.500Q1104.500 201 1101.800 196z" fill="#3b3272"/>
<path d="M1130.700 247.500Q1142 256 1152.800 262.100Q1170 258.500 1185.600 253.500Q1168 255.500 1151.500 257.500Q1141 252.500 1130.700 247.500z" fill="#3b3272"/>
</g>
<g id="chrwrap" clip-path="url(#artclip)"><g id="chr-outline" fill="#ff5a10" stroke="#ff5a10" stroke-width="4" stroke-linejoin="round"><path d="M517.1 490.5C517.1 490.5 520.1 492.8 521.4 494.2C522.8 495.7 527.5 501.7 529 502.8C530.4 504 532.5 503.9 533.8 504.1C535.1 504.4 538.8 504.4 539.7 505C540.6 505.6 541.9 509.3 541.9 509.3C541.9 509.3 534.8 509.4 533.3 509.3C531.8 509.1 530.7 507.6 529 507.6C527.2 507.6 518.2 509.3 518.2 509.3C518.2 509.3 514.2 507.6 512.9 507.1C511.5 506.6 506.4 505 506.4 505C506.4 505 510.5 503.3 510.7 502.3C511 501.3 508.6 496.4 508.6 496.4C508.6 496.4 511.9 494.4 512.9 493.7C513.9 493 517.1 490.5 517.1 490.5z"/><path d="M519.3 515.2L522 518.4C522 518.4 512.1 526 510.7 527.5C509.3 529 511 530.6 510.2 531.3C509.3 532 503.2 533.4 503.2 533.4C503.2 533.4 498.9 530 498.4 529.1C497.8 528.3 498.7 525.9 498.7 525.9C498.7 525.9 504.1 524.1 505.3 523.8C506.5 523.4 507.5 524.2 509.1 523.2C510.7 522.2 519.3 515.2 519.3 515.2z"/><path d="M518.2 544.7C518.2 544.7 520.4 547.4 520.4 547.9C520.4 548.5 518.2 549.5 518.2 549.5C518.2 549.5 511.1 547.4 509.6 546.9C508.2 546.4 505.9 545.2 505.9 545.2L506.4 542C506.4 542 510.4 541.2 511.8 541.5C513.2 541.8 518.2 544.7 518.2 544.7z"/><path d="M499.4 540.4L506.4 542C506.4 542 505.9 544.3 505.9 545.2C505.9 546.2 506.4 550.1 506.4 550.1L501 549.5C501 549.5 500.2 545.8 500 544.7C499.8 543.6 499.4 540.4 499.4 540.4z"/><path d="M518.2 529.7C518.2 529.7 526.6 531.9 529 532.4C531.3 532.8 538.1 533.4 538.1 533.4C538.1 533.4 536.9 541.9 536.5 543.6C536 545.3 534.3 547.9 534.3 547.9C534.3 547.9 528.4 547.4 527.4 546.9C526.4 546.4 526.6 543.5 525.7 543.6C524.9 543.8 520.4 547.9 520.4 547.9C520.4 547.9 517 546.1 516.6 544.7C516.2 543.3 517 537.9 517.1 536.1C517.3 534.4 518.2 529.7 518.2 529.7z"/><path d="M529 547.9L536.5 549C536.5 549 534.3 552.9 533.3 554.4C532.3 555.8 527.9 561.4 527.9 561.4L522.5 560.3C522.5 560.3 524.5 554.7 525.2 553.3C526 551.9 529 547.9 529 547.9z"/><path d="M521.4 559.2C521.4 559.2 527.2 560.7 528.4 561.4C529.7 562 532.2 564.6 532.2 564.6L529 568.6C529 568.6 523.9 566.8 522.5 566.2C521.1 565.5 517.1 563 517.1 563L521.4 559.2z"/><path d="M526.8 510.3C526.8 510.3 531.8 508.1 533.3 508.2C534.8 508.3 539.7 511.4 539.7 511.4C539.7 511.4 541.5 519.9 541.9 522.2C542.2 524.4 542.4 530.7 542.4 530.7C542.4 530.7 534.6 531.2 532.2 530.7C529.7 530.2 521.4 526.4 521.4 526.4C521.4 526.4 523 519.7 523.6 517.9C524.2 516 526.8 510.3 526.8 510.3z"/><path d="M520.4 510.3C520.4 510.3 523.9 508.9 524.7 509.8C525.5 510.7 527.2 516.8 527.4 517.9C527.5 518.9 525.7 518.9 525.7 518.9C525.7 518.9 522.1 517.8 521.4 516.8C520.8 515.8 520.4 510.3 520.4 510.3z"/><path d="M515.5 523.8C515.5 523.8 519.6 527.7 521.4 528.6C523.3 529.5 528.7 531.5 531.1 531.8C533.5 532.1 541.9 531.3 541.9 531.3L541.3 535C541.3 535 533.6 535.9 531.1 535.6C528.7 535.3 522.3 533.4 520.4 532.4C518.4 531.3 514.5 526.4 514.5 526.4L515.5 523.8z"/><path d="M533.3 504.4C533.3 504.4 538.2 504 539.7 505C541.2 505.9 544.6 511.2 546.2 512.5C547.7 513.7 551.4 515.1 552.6 515.7C553.8 516.3 556.4 517.9 556.4 517.9C556.4 517.9 555.3 521.2 554.7 522.2C554.2 523.1 551.5 525.6 551.5 525.6L546.2 526.4C546.2 526.4 543.7 521.6 542.9 520C542.2 518.4 540.8 514.3 539.7 512.5C538.6 510.7 533.3 504.4 533.3 504.4z"/><path d="M555.3 505C555.3 505 559.6 504.1 561.2 504.1C562.7 504.1 567.6 504.3 568.5 504.7C569.4 505.2 568.9 507.6 568.9 507.6C568.9 507.6 566.9 510.8 566.6 511.6C566.2 512.5 566.4 514.2 565.7 514.8C565 515.5 560.3 517.2 560.3 517.2C560.3 517.2 557.5 516 556.9 515.4C556.2 514.7 554.9 512.8 554.7 511.6C554.6 510.4 555.3 505 555.3 505z"/><path d="M529 472.7C529 472.7 532.8 475.7 534.3 476.5C535.8 477.3 540 479 541.9 479.7C543.7 480.4 550.4 482.6 550.4 482.6L554.2 478.1C554.2 478.1 555.8 480.9 556.9 481.9C558 482.8 561.6 484.9 563.3 486.2C565.1 487.5 571.9 493.1 571.9 493.1C571.9 493.1 570.9 496.3 570.9 497.4C570.8 498.6 571.4 503.4 571.4 503.4L568.7 505L566.6 503.4L564.4 507.1L561.2 505L560.1 508.4L556.9 506C556.9 506 555 509.3 554.7 510.3C554.5 511.4 555 514.8 555 514.8L550.7 512.5L551.5 516.5L547.2 513.8C547.2 513.8 546.3 513 545.9 512.5C545.6 512 544.6 510 544 509.3C543.4 508.5 541.7 506.9 540.8 506C539.9 505.2 537.4 503.1 536.5 502.3C535.6 501.5 533.3 499.1 533.3 499.1C533.3 499.1 532.5 498.4 532.2 497.4C531.9 496.5 530.9 492.6 530.6 491C530.3 489.4 530 485.6 529.8 483.5C529.6 481.4 529 472.7 529 472.7z"/></g>
<g id="chrbody"><g id="chr" stroke="#1c1c1c" stroke-width=".9" stroke-linejoin="round"><path d="M517.1 490.5C517.1 490.5 520.1 492.8 521.4 494.2C522.8 495.7 527.5 501.7 529 502.8C530.4 504 532.5 503.9 533.8 504.1C535.1 504.4 538.8 504.4 539.7 505C540.6 505.6 541.9 509.3 541.9 509.3C541.9 509.3 534.8 509.4 533.3 509.3C531.8 509.1 530.7 507.6 529 507.6C527.2 507.6 518.2 509.3 518.2 509.3C518.2 509.3 514.2 507.6 512.9 507.1C511.5 506.6 506.4 505 506.4 505C506.4 505 510.5 503.3 510.7 502.3C511 501.3 508.6 496.4 508.6 496.4C508.6 496.4 511.9 494.4 512.9 493.7C513.9 493 517.1 490.5 517.1 490.5z" fill="#b32a25"/><path d="M519.3 515.2L522 518.4C522 518.4 512.1 526 510.7 527.5C509.3 529 511 530.6 510.2 531.3C509.3 532 503.2 533.4 503.2 533.4C503.2 533.4 498.9 530 498.4 529.1C497.8 528.3 498.7 525.9 498.7 525.9C498.7 525.9 504.1 524.1 505.3 523.8C506.5 523.4 507.5 524.2 509.1 523.2C510.7 522.2 519.3 515.2 519.3 515.2z" fill="#f0e1b8"/><path d="M518.2 544.7C518.2 544.7 520.4 547.4 520.4 547.9C520.4 548.5 518.2 549.5 518.2 549.5C518.2 549.5 511.1 547.4 509.6 546.9C508.2 546.4 505.9 545.2 505.9 545.2L506.4 542C506.4 542 510.4 541.2 511.8 541.5C513.2 541.8 518.2 544.7 518.2 544.7z" fill="#f0b21c"/><path d="M499.4 540.4L506.4 542C506.4 542 505.9 544.3 505.9 545.2C505.9 546.2 506.4 550.1 506.4 550.1L501 549.5C501 549.5 500.2 545.8 500 544.7C499.8 543.6 499.4 540.4 499.4 540.4z" fill="#6b4a1c"/><path d="M518.2 529.7C518.2 529.7 526.6 531.9 529 532.4C531.3 532.8 538.1 533.4 538.1 533.4C538.1 533.4 536.9 541.9 536.5 543.6C536 545.3 534.3 547.9 534.3 547.9C534.3 547.9 528.4 547.4 527.4 546.9C526.4 546.4 526.6 543.5 525.7 543.6C524.9 543.8 520.4 547.9 520.4 547.9C520.4 547.9 517 546.1 516.6 544.7C516.2 543.3 517 537.9 517.1 536.1C517.3 534.4 518.2 529.7 518.2 529.7z" fill="#454545"/><path d="M529 547.9L536.5 549C536.5 549 534.3 552.9 533.3 554.4C532.3 555.8 527.9 561.4 527.9 561.4L522.5 560.3C522.5 560.3 524.5 554.7 525.2 553.3C526 551.9 529 547.9 529 547.9z" fill="#f0b21c"/><path d="M521.4 559.2C521.4 559.2 527.2 560.7 528.4 561.4C529.7 562 532.2 564.6 532.2 564.6L529 568.6C529 568.6 523.9 566.8 522.5 566.2C521.1 565.5 517.1 563 517.1 563L521.4 559.2z" fill="#6b4a1c"/><path d="M526.8 510.3C526.8 510.3 531.8 508.1 533.3 508.2C534.8 508.3 539.7 511.4 539.7 511.4C539.7 511.4 541.5 519.9 541.9 522.2C542.2 524.4 542.4 530.7 542.4 530.7C542.4 530.7 534.6 531.2 532.2 530.7C529.7 530.2 521.4 526.4 521.4 526.4C521.4 526.4 523 519.7 523.6 517.9C524.2 516 526.8 510.3 526.8 510.3z" fill="#f0b21c"/><path d="M520.4 510.3C520.4 510.3 523.9 508.9 524.7 509.8C525.5 510.7 527.2 516.8 527.4 517.9C527.5 518.9 525.7 518.9 525.7 518.9C525.7 518.9 522.1 517.8 521.4 516.8C520.8 515.8 520.4 510.3 520.4 510.3z" fill="#7d7d7d"/><path d="M515.5 523.8C515.5 523.8 519.6 527.7 521.4 528.6C523.3 529.5 528.7 531.5 531.1 531.8C533.5 532.1 541.9 531.3 541.9 531.3L541.3 535C541.3 535 533.6 535.9 531.1 535.6C528.7 535.3 522.3 533.4 520.4 532.4C518.4 531.3 514.5 526.4 514.5 526.4L515.5 523.8z" fill="#7d7d7d"/><path d="M533.3 504.4C533.3 504.4 538.2 504 539.7 505C541.2 505.9 544.6 511.2 546.2 512.5C547.7 513.7 551.4 515.1 552.6 515.7C553.8 516.3 556.4 517.9 556.4 517.9C556.4 517.9 555.3 521.2 554.7 522.2C554.2 523.1 551.5 525.6 551.5 525.6L546.2 526.4C546.2 526.4 543.7 521.6 542.9 520C542.2 518.4 540.8 514.3 539.7 512.5C538.6 510.7 533.3 504.4 533.3 504.4z" fill="#b32a25"/><path d="M555.3 505C555.3 505 559.6 504.1 561.2 504.1C562.7 504.1 567.6 504.3 568.5 504.7C569.4 505.2 568.9 507.6 568.9 507.6C568.9 507.6 566.9 510.8 566.6 511.6C566.2 512.5 566.4 514.2 565.7 514.8C565 515.5 560.3 517.2 560.3 517.2C560.3 517.2 557.5 516 556.9 515.4C556.2 514.7 554.9 512.8 554.7 511.6C554.6 510.4 555.3 505 555.3 505z" fill="#f0dfb5"/><path d="M529 472.7C529 472.7 532.8 475.7 534.3 476.5C535.8 477.3 540 479 541.9 479.7C543.7 480.4 550.4 482.6 550.4 482.6L554.2 478.1C554.2 478.1 555.8 480.9 556.9 481.9C558 482.8 561.6 484.9 563.3 486.2C565.1 487.5 571.9 493.1 571.9 493.1C571.9 493.1 570.9 496.3 570.9 497.4C570.8 498.6 571.4 503.4 571.4 503.4L568.7 505L566.6 503.4L564.4 507.1L561.2 505L560.1 508.4L556.9 506C556.9 506 555 509.3 554.7 510.3C554.5 511.4 555 514.8 555 514.8L550.7 512.5L551.5 516.5L547.2 513.8C547.2 513.8 546.3 513 545.9 512.5C545.6 512 544.6 510 544 509.3C543.4 508.5 541.7 506.9 540.8 506C539.9 505.2 537.4 503.1 536.5 502.3C535.6 501.5 533.3 499.1 533.3 499.1C533.3 499.1 532.5 498.4 532.2 497.4C531.9 496.5 530.9 492.6 530.6 491C530.3 489.4 530 485.6 529.8 483.5C529.6 481.4 529 472.7 529 472.7z" fill="#2f8291"/></g>
<circle cx="534.3" cy="510.5" r="2.700" fill="#f4f4f4" stroke="#1c1c1c" stroke-width=".8"/><circle cx="534.5" cy="510.8" r="1" fill="#1c1c1c"/>
<path d="M528.4 518.9L534.3 517.3L537.6 523.2L531.1 526.4z" fill="#f0c23a" stroke="#4a7ab0" stroke-width=".9"/>
<path d="M556 504.7L561.4 505.2L560.1 506.9L557.3 506.5z" fill="#fff" stroke="#1c1c1c" stroke-width=".6"/>
<path d="M561.2 513.3L564.9 512.7" stroke="#1c1c1c" stroke-width="1.100"/>
<path d="M534.3 489.9Q550.4 494.2 568.7 494.2" stroke="#256a78" stroke-width="1.600" fill="none"/>
<path d="M512.9 494.2L521.4 503.9M509.1 500.7L518.2 507.1" stroke="#8a1d1b" stroke-width="1" fill="none"/>
</g></g>
<g id="gridover"><path d="M407.5 153V642" stroke="rgba(190,190,190,.6)" stroke-width="1"/><path d="M452.5 153V642" stroke="rgba(172,172,172,.3)" stroke-width="1"/><path d="M497.5 153V642" stroke="rgba(172,172,172,.3)" stroke-width="1"/><path d="M542.5 153V642" stroke="rgba(172,172,172,.3)" stroke-width="1"/><path d="M587.5 153V642" stroke="rgba(172,172,172,.3)" stroke-width="1"/><path d="M632.5 153V642" stroke="rgba(172,172,172,.3)" stroke-width="1"/><path d="M677.5 153V642" stroke="rgba(172,172,172,.3)" stroke-width="1"/><path d="M722.5 153V642" stroke="rgba(172,172,172,.3)" stroke-width="1"/><path d="M767.5 153V642" stroke="rgba(172,172,172,.3)" stroke-width="1"/><path d="M812.5 153V642" stroke="rgba(172,172,172,.3)" stroke-width="1"/><path d="M857.5 153V642" stroke="rgba(190,190,190,.6)" stroke-width="1"/><path d="M902.5 153V642" stroke="rgba(172,172,172,.3)" stroke-width="1"/><path d="M947.5 153V642" stroke="rgba(172,172,172,.3)" stroke-width="1"/><path d="M992.5 153V642" stroke="rgba(172,172,172,.3)" stroke-width="1"/><path d="M1037.5 153V642" stroke="rgba(172,172,172,.3)" stroke-width="1"/><path d="M1082.5 153V642" stroke="rgba(172,172,172,.3)" stroke-width="1"/><path d="M1127.5 153V642" stroke="rgba(172,172,172,.3)" stroke-width="1"/><path d="M1172.5 153V642" stroke="rgba(172,172,172,.3)" stroke-width="1"/><path d="M1217.5 153V642" stroke="rgba(172,172,172,.3)" stroke-width="1"/><path d="M1262.5 153V642" stroke="rgba(172,172,172,.3)" stroke-width="1"/><path d="M1307.5 153V642" stroke="rgba(190,190,190,.6)" stroke-width="1"/><path d="M368 174.8H1347" stroke="rgba(172,172,172,.3)" stroke-width="1"/><path d="M368 219.8H1347" stroke="rgba(172,172,172,.3)" stroke-width="1"/><path d="M368 264.8H1347" stroke="rgba(172,172,172,.3)" stroke-width="1"/><path d="M368 309.8H1347" stroke="rgba(172,172,172,.3)" stroke-width="1"/><path d="M368 354.8H1347" stroke="rgba(172,172,172,.3)" stroke-width="1"/><path d="M368 399.8H1347" stroke="rgba(190,190,190,.6)" stroke-width="1"/><path d="M368 444.8H1347" stroke="rgba(172,172,172,.3)" stroke-width="1"/><path d="M368 489.8H1347" stroke="rgba(172,172,172,.3)" stroke-width="1"/><path d="M368 534.8H1347" stroke="rgba(172,172,172,.3)" stroke-width="1"/><path d="M368 579.8H1347" stroke="rgba(172,172,172,.3)" stroke-width="1"/><path d="M368 624.8H1347" stroke="rgba(172,172,172,.3)" stroke-width="1"/></g>
<g id="overlay">
<path d="M437.500 408V636M627.500 408V636" stroke="rgba(225,225,225,.5)" stroke-width="1"/>
<path d="M437 408.200H627" stroke="rgba(225,225,225,.4)" stroke-width="1"/>
<path d="M437 636H627" stroke="rgba(235,235,215,.5)" stroke-width="2"/>
<g fill="#2d7fe0" stroke="#f4f4f4" stroke-width="1"><circle cx="437" cy="408" r="4.200"/><circle cx="627" cy="408" r="4.200"/><circle cx="437" cy="636" r="4.200"/><circle cx="627" cy="636" r="4.200"/></g>
</g>
</svg></div>
<!-- project.html -->
<div class="a" style="left:8px;top:673px;width:1435px;height:329px;background:#383838"></div>
<div class="a" style="left:8px;top:673px;width:1435px;height:19px;background:#282828"></div>
<div class="a" style="left:8px;top:673px;width:80px;height:19px;background:#3c3c3c;border-radius:3px 3px 0 0"></div>
<svg style="left:15px;top:678px" width="12" height="10" viewBox="0 0 12 10"><path d="M0 1.200A1.200 1.200 0 0 1 1.200 0H4.500L6 1.800H10.800A1.200 1.200 0 0 1 12 3V8.800A1.200 1.200 0 0 1 10.800 10H1.200A1.200 1.200 0 0 1 0 8.800z" fill="#d2d2d2"/></svg>
<div class="t" style="left:31px;top:676.3px;font-size:12.5px;color:#d2d2d2">Project</div>
<svg style="left:98px;top:678px" width="11" height="11" viewBox="0 0 11 11"><rect x=".5" y=".5" width="10" height="10" rx="1" fill="#d2d2d2"/><path d="M2 3h7M2 5.200h7M2 7.400h7" stroke="#282828" stroke-width="1"/></svg>
<div class="t" style="left:113px;top:676.3px;font-size:12.5px;color:#d2d2d2">Console</div>
<svg style="left:1408px;top:676px" width="10" height="11" viewBox="0 0 10 11"><rect x="1" y="5.500" width="8" height="5" rx=".8" stroke="#c4c4c4" stroke-width="1.200" fill="none"/><path d="M3 5.500V3.200a2.300 2.300 0 0 1 4.600 0" stroke="#c4c4c4" stroke-width="1.200" fill="none"/></svg>
<svg style="left:1428px;top:677px" width="4" height="12" viewBox="0 0 4 12"><rect x="1" y="0" width="2" height="2" fill="#c4c4c4"/><rect x="1" y="4.500" width="2" height="2" fill="#c4c4c4"/><rect x="1" y="9" width="2" height="2" fill="#c4c4c4"/></svg>
<div class="a" style="left:8px;top:692px;width:1435px;height:20px;background:#3c3c3c"></div>
<div class="a" style="left:8px;top:712px;width:1435px;height:1px;background:#232323"></div>
<svg style="left:15px;top:696px" width="24" height="12" viewBox="0 0 24 12"><path d="M6 0v12M0 6h12" stroke="#c4c4c4" stroke-width="1.700"/><path d="M16 4.500h7L19.500 8.500z" fill="#c4c4c4"/></svg>
<div class="a" style="left:978px;top:694px;width:317px;height:16px;background:#2a2a2a;border:1px solid #212121;border-radius:3px"></div>
<svg style="left:983px;top:698px" width="8" height="9" viewBox="0 0 8 9"><circle cx="3" cy="3" r="2.200" stroke="#c4c4c4" stroke-width="1.200" fill="none"/><path d="M4.600 4.600 7 7.500" stroke="#c4c4c4" stroke-width="1.500"/></svg>
<div class="a" style="left:1278px;top:695px;width:16px;height:14px;background:#3a3a3a;border-radius:0 3px 3px 0"></div>
<svg style="left:1280px;top:696px" width="13" height="12" viewBox="0 0 13 12"><rect x="3.500" y=".7" width="8.800" height="8.300" rx="1" stroke="#c4c4c4" stroke-width="1.100" fill="none"/><rect x=".6" y="7.500" width="3.800" height="3.800" stroke="#c4c4c4" stroke-width="1.100" fill="#3a3a3a"/><path d="M5.500 7 9.800 2.800M6.800 2.700h3.100v3.100" stroke="#c4c4c4" stroke-width="1.100" fill="none"/></svg>
<div class="a" style="left:1299px;top:692px;width:1px;height:20px;background:#2c2c2c"></div>
<div class="a" style="left:1325px;top:692px;width:1px;height:20px;background:#2c2c2c"></div>
<div class="a" style="left:1351px;top:692px;width:1px;height:20px;background:#2c2c2c"></div>
<div class="a" style="left:1377px;top:692px;width:1px;height:20px;background:#2c2c2c"></div>
<div class="a" style="left:1403px;top:692px;width:1px;height:20px;background:#2c2c2c"></div>
<svg style="left:1305px;top:695px" width="14" height="14" viewBox="0 0 14 14"><rect x="2.500" y="0" width="5.500" height="5.500" fill="#c4c4c4"/><circle cx="4" cy="9.500" r="3.800" fill="#c4c4c4"/><path d="M10 3.500 13.500 10.500h-7z" fill="#c4c4c4" stroke="#3c3c3c" stroke-width=".8"/></svg>
<svg style="left:1331px;top:696px" width="12" height="12" viewBox="0 0 12 12"><path d="M0 7 5.500 1.500 11 1l-.5 5.500L5 12z" fill="#c4c4c4"/><circle cx="8.600" cy="3.400" r="1" fill="#3c3c3c"/></svg>
<svg style="left:1356px;top:695px" width="14" height="14" viewBox="0 0 14 14"><path d="M4.200 0h5.600L14 4.200v5.600L9.800 14H4.200L0 9.800V4.200z" fill="#d2d2d2"/><rect x="6.200" y="2.800" width="1.600" height="5.600" fill="#3c3c3c"/><rect x="6.200" y="9.600" width="1.600" height="1.700" fill="#3c3c3c"/></svg>
<svg style="left:1383px;top:695px" width="13" height="13" viewBox="0 0 13 13"><path d="M6.500 .5 8.300 4.700 12.800 5.100 9.400 8.100 10.400 12.500 6.500 10.200 2.600 12.500 3.600 8.100 .2 5.100 4.700 4.700z" fill="#8c8c8c"/></svg>
<svg style="left:1408px;top:697px" width="16" height="10" viewBox="0 0 16 10"><path d="M.7 5C3 1.500 5.500 .7 8 .7s5 .8 7.300 4.300C13 8.500 10.500 9.300 8 9.300S3 8.500.7 5z" stroke="#8c8c8c" stroke-width="1.100" fill="none"/><circle cx="8" cy="4.600" r="2.600" fill="#7c7c7c"/></svg>
<div class="t" style="left:1424.5px;top:695.0999999999999px;font-size:12px;color:#c4c4c4">21</div>
<svg style="left:13px;top:717px" width="9" height="8" viewBox="0 0 9 8"><path d="M0 .5h9L4.500 7.500z" fill="#6e6e6e"/></svg>
<svg style="left:26px;top:714.500px" width="13" height="13" viewBox="0 0 13 13"><path d="M6.500 .5 8.300 4.700 12.800 5.100 9.400 8.100 10.400 12.500 6.500 10.200 2.600 12.500 3.600 8.100 .2 5.100 4.700 4.700z" fill="#c4c4c4"/></svg>
<div class="t b" style="left:43px;top:713.3px;font-size:12.5px;color:#d2d2d2">Favorites</div>
<svg style="left:40px;top:731px" width="13" height="12" viewBox="0 0 13 12"><circle cx="4.800" cy="4.800" r="4" stroke="#c4c4c4" stroke-width="1.100" fill="none"/><path d="M7.800 7.800 11.500 11.300" stroke="#c4c4c4" stroke-width="1.700" stroke-linecap="round"/></svg>
<div class="t" style="left:56px;top:729.3px;font-size:12.5px;color:#c8c8c8">All Materials</div>
<svg style="left:40px;top:747px" width="13" height="12" viewBox="0 0 13 12"><circle cx="4.800" cy="4.800" r="4" stroke="#c4c4c4" stroke-width="1.100" fill="none"/><path d="M7.800 7.800 11.500 11.300" stroke="#c4c4c4" stroke-width="1.700" stroke-linecap="round"/></svg>
<div class="t" style="left:56px;top:745.3px;font-size:12.5px;color:#c8c8c8">All Models</div>
<svg style="left:40px;top:763px" width="13" height="12" viewBox="0 0 13 12"><circle cx="4.800" cy="4.800" r="4" stroke="#c4c4c4" stroke-width="1.100" fill="none"/><path d="M7.800 7.800 11.500 11.300" stroke="#c4c4c4" stroke-width="1.700" stroke-linecap="round"/></svg>
<div class="t" style="left:56px;top:761.3px;font-size:12.5px;color:#c8c8c8">All Prefabs</div>
<svg style="left:13px;top:796px" width="9" height="8" viewBox="0 0 9 8"><path d="M0 .5h9L4.500 7.500z" fill="#6e6e6e"/></svg>
<svg style="left:26px;top:795px" width="14" height="10" viewBox="0 0 14 10"><path d="M0 1.200A1.200 1.200 0 0 1 1.200 0H4.500L6 1.800H10.800A1.200 1.200 0 0 1 12 3V3.800H3.500L.8 9.500 0 8.800z" fill="#c2c2c2"/><path d="M3.800 4.600H14L11.300 10H1.200z" fill="#c2c2c2"/></svg>
<div class="t b" style="left:43px;top:792.3px;font-size:12.5px;color:#d2d2d2">Assets</div>
<div class="a" style="left:8px;top:808px;width:199px;height:16px;background:#4d4d4d"></div>
<svg style="left:40px;top:811px" width="12" height="10" viewBox="0 0 12 10"><path d="M0 1.200A1.200 1.200 0 0 1 1.200 0H4.500L6 1.800H10.800A1.200 1.200 0 0 1 12 3V8.800A1.200 1.200 0 0 1 10.800 10H1.200A1.200 1.200 0 0 1 0 8.800z" fill="#c2c2c2"/></svg>
<div class="t" style="left:56px;top:808.3px;font-size:12.5px;color:#c8c8c8">Resources</div>
<svg style="left:40px;top:827px" width="12" height="10" viewBox="0 0 12 10"><path d="M0 1.200A1.200 1.200 0 0 1 1.200 0H4.500L6 1.800H10.800A1.200 1.200 0 0 1 12 3V8.800A1.200 1.200 0 0 1 10.800 10H1.200A1.200 1.200 0 0 1 0 8.800z" fill="#c2c2c2"/></svg>
<div class="t" style="left:56px;top:824.3px;font-size:12.5px;color:#c8c8c8">Scenes</div>
<svg style="left:13.5px;top:843.5px" width="8" height="9" viewBox="0 0 8 9"><path d="M.5 0v9L7.500 4.500z" fill="#6e6e6e"/></svg>
<svg style="left:26px;top:843px" width="12" height="10" viewBox="0 0 12 10"><path d="M0 1.200A1.200 1.200 0 0 1 1.200 0H4.500L6 1.800H10.800A1.200 1.200 0 0 1 12 3V8.800A1.200 1.200 0 0 1 10.800 10H1.200A1.200 1.200 0 0 1 0 8.800z" fill="#c2c2c2"/></svg>
<div class="t b" style="left:43px;top:840.3px;font-size:12.5px;color:#d2d2d2">Packages</div>
<div class="a" style="left:207px;top:713px;width:1px;height:289px;background:#232323"></div>
<div class="a" style="left:208px;top:713px;width:1235px;height:21px;background:#3e3e3e"></div>
<div class="a" style="left:208px;top:734px;width:1235px;height:247px;background:#333333"></div>
<div class="a" style="left:208px;top:981px;width:1235px;height:21px;background:#3e3e3e"></div>
<div class="t" style="left:212px;top:715.3px;font-size:12.5px;color:#bdbdbd">Assets</div>
<svg style="left:256px;top:718.500px" width="6" height="9" viewBox="0 0 6 9"><path d="M1 .5 5 4.500 1 8.500" stroke="#a0a0a0" stroke-width="1.100" fill="none"/></svg>
<div class="t b" style="left:267px;top:715.3px;font-size:12.5px;color:#d2d2d2">Resources</div>
<div class="a" style="left:1372px;top:991.5px;width:56px;height:1.5px;background:#6a6a6a"></div>
<div class="a" style="left:1399px;top:987px;width:10px;height:10px;border-radius:5px;background:#c4c4c4"></div>
<svg style="left:223px;top:760px;overflow:hidden" width="64" height="32" viewBox="0 0 64 32"><rect width="64" height="32" fill="#7685f8"/><use href="#art" transform="scale(.06537) translate(-368 -153)"/></svg>
<svg style="left:278.5px;top:768px" width="16" height="16" viewBox="0 0 16 16"><circle cx="8" cy="8.400" r="7.600" fill="rgba(0,0,0,.35)"/><circle cx="8" cy="8" r="7.500" fill="#d0d0d0"/><path d="M5.800 4.300 11.800 8 5.800 11.700z" fill="#3a3a3a"/></svg>
<div class="t" style="left:217px;top:808.300px;width:76px;text-align:center;font-size:10.600px;color:#c4c4c4">bg5</div>
<svg style="left:304.0px;top:755px" width="52" height="38" viewBox="0 0 52 38"><path d="M8.500 11H22M4 19.400H18M3.800 26.900H14" stroke="#c8c8c8" stroke-width="3.600" stroke-linecap="round"/><path d="M32 1.500Q33 0 34 1.500L51 32Q52 35.500 49 35.500H16.500Q13.500 35.500 14.500 32z" fill="#7efbe5" stroke="#7efbe5" stroke-width="1.200" stroke-linejoin="round"/></svg>
<div class="t" style="left:293px;top:808.300px;width:76px;text-align:center;font-size:10.600px;color:#c4c4c4">Jump</div>
<div class="a" style="left:374.5px;top:753px;width:64.5px;height:46px;background:#303030;box-shadow:0 1px 2px rgba(0,0,0,.5);border:1px solid #2b2b2b"></div>
<svg style="left:377px;top:771px" width="9.0" height="11.3"><use href="#chrbody" transform="scale(0.112) translate(-496 -471)"/></svg>
<svg style="left:389px;top:771px" width="9.0" height="11.3"><use href="#chrbody" transform="scale(0.112) translate(-496 -471)"/></svg>
<svg style="left:401px;top:771px" width="9.0" height="11.3"><use href="#chrbody" transform="scale(0.112) translate(-496 -471)"/></svg>
<svg style="left:413px;top:771px" width="9.0" height="11.3"><use href="#chrbody" transform="scale(0.112) translate(-496 -471)"/></svg>
<svg style="left:425px;top:771px" width="9.0" height="11.3"><use href="#chrbody" transform="scale(0.112) translate(-496 -471)"/></svg>
<svg style="left:430px;top:768px" width="16" height="16" viewBox="0 0 16 16"><circle cx="8" cy="8.400" r="7.600" fill="rgba(0,0,0,.35)"/><circle cx="8" cy="8" r="7.500" fill="#d0d0d0"/><path d="M5.800 4.300 11.800 8 5.800 11.700z" fill="#3a3a3a"/></svg>
<div class="t" style="left:369px;top:808.300px;width:76px;text-align:center;font-size:10.600px;color:#c4c4c4">Jump</div>
<div class="a" style="left:450.5px;top:753px;width:64.5px;height:46px;background:#303030;box-shadow:0 1px 2px rgba(0,0,0,.5);border:1px solid #2b2b2b"></div>
<svg style="left:477px;top:770.500px" width="10" height="10" viewBox="0 0 10 10"><path d="M1 8 3 3.500 7 1 9 5 8.500 8 4 9.500z" fill="#a8704c"/><path d="M3 3.500 7 1 6 4 3.500 6z" fill="#cba876"/></svg>
<svg style="left:506px;top:768px" width="16" height="16" viewBox="0 0 16 16"><circle cx="8" cy="8.400" r="7.600" fill="rgba(0,0,0,.35)"/><circle cx="8" cy="8" r="7.500" fill="#d0d0d0"/><path d="M5.800 4.300 11.800 8 5.800 11.700z" fill="#3a3a3a"/></svg>
<div class="t" style="left:443.5px;top:808.300px;width:76px;text-align:center;font-size:10.600px;color:#c4c4c4">obstructio...</div>
<div class="a" style="left:526.5px;top:753px;width:64.5px;height:46px;background:#303030;box-shadow:0 1px 2px rgba(0,0,0,.5);border:1px solid #2b2b2b"></div>
<svg style="left:536px;top:769.5px" width="10.3" height="13.0"><use href="#chrbody" transform="scale(0.1288) translate(-496 -471)"/></svg>
<svg style="left:566px;top:770.5px" width="10.3" height="13.0"><use href="#chrbody" transform="scale(0.1288) translate(-496 -471)"/></svg>
<svg style="left:582.5px;top:768px" width="16" height="16" viewBox="0 0 16 16"><circle cx="8" cy="8.400" r="7.600" fill="rgba(0,0,0,.35)"/><circle cx="8" cy="8" r="7.500" fill="#d0d0d0"/><path d="M5.800 4.300 11.800 8 5.800 11.700z" fill="#3a3a3a"/></svg>
<div class="t" style="left:520.5px;top:808.300px;width:76px;text-align:center;font-size:10.600px;color:#c4c4c4">Play</div>
<svg style="left:611px;top:752px" width="48" height="48" viewBox="0 0 48 48"><path d="M20 10H36.500A2 2 0 0 1 38.500 12V29M10 20V36.500A2 2 0 0 0 12 38.500H29" stroke="#7efbe5" stroke-width="3.600" fill="none"/><rect x="0" y="0" width="20" height="20" rx="3.500" fill="#c8c8c8"/><rect x="28" y="28" width="20" height="20" rx="3.500" fill="#c8c8c8"/></svg>
<div class="t" style="left:597px;top:808.300px;width:76px;text-align:center;font-size:10.600px;color:#c4c4c4">Player</div>
<svg style="left:684.0px;top:755px" width="52" height="38" viewBox="0 0 52 38"><path d="M8.500 11H22M4 19.400H18M3.800 26.900H14" stroke="#c8c8c8" stroke-width="3.600" stroke-linecap="round"/><path d="M32 1.500Q33 0 34 1.500L51 32Q52 35.500 49 35.500H16.500Q13.500 35.500 14.500 32z" fill="#7efbe5" stroke="#7efbe5" stroke-width="1.200" stroke-linejoin="round"/></svg>
<div class="t" style="left:671.5px;top:808.300px;width:76px;text-align:center;font-size:10.600px;color:#c4c4c4">PlayerAni...</div>
<svg style="left:760.0px;top:755px" width="52" height="38" viewBox="0 0 52 38"><path d="M8.500 11H22M4 19.400H18M3.800 26.900H14" stroke="#c8c8c8" stroke-width="3.600" stroke-linecap="round"/><path d="M32 1.500Q33 0 34 1.500L51 32Q52 35.500 49 35.500H16.500Q13.500 35.500 14.500 32z" fill="#7efbe5" stroke="#7efbe5" stroke-width="1.200" stroke-linejoin="round"/></svg>
<div class="t" style="left:749px;top:808.300px;width:76px;text-align:center;font-size:10.600px;color:#c4c4c4">Run</div>
<div class="a" style="left:830.5px;top:753px;width:64.5px;height:46px;background:#303030;box-shadow:0 1px 2px rgba(0,0,0,.5);border:1px solid #2b2b2b"></div>
<svg style="left:832px;top:771px" width="9.0" height="11.3"><use href="#chrbody" transform="scale(0.112) translate(-496 -471)"/></svg>
<svg style="left:844px;top:771px" width="9.0" height="11.3"><use href="#chrbody" transform="scale(0.112) translate(-496 -471)"/></svg>
<svg style="left:856px;top:771px" width="9.0" height="11.3"><use href="#chrbody" transform="scale(0.112) translate(-496 -471)"/></svg>
<svg style="left:868px;top:771px" width="9.0" height="11.3"><use href="#chrbody" transform="scale(0.112) translate(-496 -471)"/></svg>
<svg style="left:880px;top:771px" width="9.0" height="11.3"><use href="#chrbody" transform="scale(0.112) translate(-496 -471)"/></svg>
<svg style="left:886.5px;top:768px" width="16" height="16" viewBox="0 0 16 16"><circle cx="8" cy="8.400" r="7.600" fill="rgba(0,0,0,.35)"/><circle cx="8" cy="8" r="7.500" fill="#d0d0d0"/><path d="M5.800 4.300 11.800 8 5.800 11.700z" fill="#3a3a3a"/></svg>
<div class="t" style="left:825px;top:808.300px;width:76px;text-align:center;font-size:10.600px;color:#c4c4c4">Run</div>
<svg style="left:1815px;top:1005px" width="96" height="18" viewBox="0 0 96 18"><g stroke="#c4c4c4" stroke-width="1.200" fill="none"><ellipse cx="8" cy="10" rx="3.800" ry="5" fill="#c4c4c4"/><path d="M4.500 7 1.500 5M11.500 7l3-2M4 10H1M12 10h3M4.500 13l-3 2M11.500 13l3 2M6 5 5 2.500M10 5l1-2.500"/><path d="M1.500 2 14.500 16.500" stroke="#191919" stroke-width="3"/><path d="M1.500 2 14.500 16.500"/></g><g transform="translate(26,0)"><ellipse cx="8" cy="4.500" rx="6" ry="2.600" fill="#c4c4c4"/><path d="M2 7.500c0 3.500 12 3.500 12 0M2 11c0 3.500 12 3.500 12 0" stroke="#c4c4c4" stroke-width="1.800" fill="none"/><path d="M4 16.500 15 6" stroke="#191919" stroke-width="3"/><path d="M4 16.500 15 6" stroke="#c4c4c4" stroke-width="1.200"/></g><g transform="translate(53,0)" stroke="#c4c4c4" stroke-width="1.200" fill="none"><circle cx="8" cy="9" r="5.500"/><path d="M8 3.500V1.500M8 16.500v-2M2.500 9h-2M15.500 9h-2M8 6.500v5"/><circle cx="8" cy="9" r="2"/><path d="M1.500 2 14.500 16.500" stroke="#191919" stroke-width="3"/><path d="M1.500 2 14.500 16.500"/></g><g transform="translate(79,1)"><circle cx="8" cy="8" r="6.800" stroke="#c4c4c4" stroke-width="1.300" fill="none"/><path d="M4.800 8.200 7.200 10.600 11.500 5.800" stroke="#c4c4c4" stroke-width="1.400" fill="none"/></g></svg>
<div class="a" style="left:1810px;top:1003px;width:1px;height:21px;background:#232323"></div>
<div class="a" style="left:1837px;top:1003px;width:1px;height:21px;background:#232323"></div>
<div class="a" style="left:1864px;top:1003px;width:1px;height:21px;background:#232323"></div>
<div class="a" style="left:1890px;top:1003px;width:1px;height:21px;background:#232323"></div>
<!-- inspector.html -->
<div class="a" id="insp" style="left:0;top:0;width:1920px;height:1002px;overflow:hidden"><div class="a" style="left:1445px;top:81px;width:471px;height:921px;background:#383838"></div>
<div class="a" style="left:1445px;top:81px;width:471px;height:19px;background:#282828"></div>
<div class="a" style="left:1445px;top:81px;width:93px;height:19px;background:#3c3c3c;border-radius:3px 3px 0 0"></div>
<svg style="left:1454px;top:86px" width="10" height="10" viewBox="0 0 10 10"><circle cx="5" cy="5" r="5" fill="#d2d2d2"/><rect x="4.200" y="4.200" width="1.700" height="3.800" fill="#3c3c3c"/><circle cx="5" cy="2.600" r="1" fill="#3c3c3c"/></svg>
<div class="t" style="left:1469px;top:83.8px;font-size:12.5px;color:#d2d2d2">Inspector</div>
<svg style="left:1880px;top:84px" width="10" height="11" viewBox="0 0 10 11"><rect x="1" y="5.500" width="8" height="5" rx=".8" stroke="#c4c4c4" stroke-width="1.200" fill="none"/><path d="M3 5.500V3.200a2.300 2.300 0 0 1 4.600 0" stroke="#c4c4c4" stroke-width="1.200" fill="none"/></svg>
<svg style="left:1899.500px;top:84px" width="4" height="12" viewBox="0 0 4 12"><rect x="1" y="0" width="2" height="2" fill="#c4c4c4"/><rect x="1" y="4.500" width="2" height="2" fill="#c4c4c4"/><rect x="1" y="9" width="2" height="2" fill="#c4c4c4"/></svg>
<div class="a" style="left:1445px;top:100px;width:458px;height:59px;background:#3c3c3c"></div>
<svg style="left:1452px;top:110px" width="27" height="27" viewBox="0 0 27 27"><path d="M10.500 1 19.500 5.800v10.400L10.500 21 1.500 16.200V5.800z" stroke="#c8c8c8" stroke-width="1.500" fill="none" stroke-linejoin="round"/><path d="M1.800 6 10.500 10.600 19.200 6M10.500 10.600V20.800" stroke="#c8c8c8" stroke-width="1.500" fill="none"/><path d="M18.500 22h7L22 26z" fill="#c4c4c4"/></svg>
<div class="a cb" style="left:1492px;top:110.5px"></div>
<svg style="left:1494px;top:114px" width="10" height="8" viewBox="0 0 10 8"><path d="M1 4 3.800 6.800 9 1.200" stroke="#e8e8e8" stroke-width="1.500" fill="none"/></svg>
<div class="a fld" style="left:1512px;top:109.5px;width:311px"></div>
<div class="t" style="left:1515px;top:110.3px;font-size:12.8px;color:#e8e8e8">Player</div>
<div class="a cb" style="left:1826px;top:110.5px"></div>
<div class="t" style="left:1844px;top:110.8px;font-size:12.4px;color:#c8c8c8">Static</div>
<svg style="left:1888.500px;top:116px" width="8" height="5" viewBox="0 0 8 5"><path d="M0 0h8L4 4.600z" fill="#c4c4c4"/></svg>
<div class="t" style="left:1485px;top:134.8px;font-size:12.4px;color:#c8c8c8">Tag</div>
<div class="a dd" style="left:1512px;top:133.5px;width:173px"></div>
<div class="t" style="left:1515.5px;top:133.8px;font-size:12.4px;color:#e4e4e4">Player</div>
<svg style="left:1671.5px;top:139.5px" width="8" height="5" viewBox="0 0 8 5"><path d="M0 0h8L4 4.600z" fill="#c4c4c4"/></svg>
<div class="t" style="left:1698px;top:134.8px;font-size:12.4px;color:#c8c8c8">Layer</div>
<div class="a dd" style="left:1735px;top:133.5px;width:163px"></div>
<div class="t" style="left:1738.5px;top:133.8px;font-size:12.4px;color:#e4e4e4">Default</div>
<svg style="left:1884.5px;top:139.5px" width="8" height="5" viewBox="0 0 8 5"><path d="M0 0h8L4 4.600z" fill="#c4c4c4"/></svg>
<div class="a" style="left:1445px;top:159px;width:458px;height:1px;background:#1a1a1a"></div>
<div class="a" style="left:1445px;top:160px;width:458px;height:21px;background:#3e3e3e"></div>
<svg style="left:1450.5px;top:166.5px" width="10" height="8" viewBox="0 0 10 8"><path d="M.5 .5h9L5 7.500z" fill="#7e7e7e"/></svg>
<svg style="left:1466px;top:162.5px" width="15" height="16" viewBox="0 0 15 16"><path d="M7.500 8V1.500" stroke="#9fe24a" stroke-width="2" stroke-linecap="round"/><path d="M7.500 8 2 12" stroke="#4fb4f0" stroke-width="2" stroke-linecap="round"/><path d="M7.500 8 13 12" stroke="#f06a3a" stroke-width="2" stroke-linecap="round"/></svg>
<div class="t b" style="left:1505px;top:162.8px;font-size:12.4px;color:#dcdcdc">Transform</div>
<svg style="left:1845px;top:165.0px" width="11" height="11" viewBox="0 0 11 11"><circle cx="5.500" cy="5.500" r="5.300" fill="#c4c4c4"/></svg>
<div class="t b" style="left:1847.300px;top:162.2px;font-size:9.500px;color:#3e3e3e">?</div>
<svg style="left:1864px;top:165.5px" width="12" height="10" viewBox="0 0 12 10"><path d="M0 2.500h12M0 7.500h12" stroke="#c4c4c4" stroke-width="1.200"/><path d="M7.500 0v5M3.500 5v5" stroke="#c4c4c4" stroke-width="1.600"/></svg>
<svg style="left:1888.500px;top:165.0px" width="4" height="12" viewBox="0 0 4 12"><rect x="1" y="0" width="2" height="2" fill="#c4c4c4"/><rect x="1" y="4.500" width="2" height="2" fill="#c4c4c4"/><rect x="1" y="9" width="2" height="2" fill="#c4c4c4"/></svg>
<div class="a" style="left:1445px;top:181px;width:458px;height:1px;background:#303030"></div>
<div class="t" style="left:1464px;top:186.8px;font-size:12.4px;color:#c8c8c8">Position</div>
<div class="t" style="left:1632px;top:186.8px;font-size:12.4px;color:#c8c8c8">X</div>
<div class="a fld" style="left:1646px;top:186.0px;width:71.5px"></div>
<div class="t" style="left:1649px;top:186.8px;font-size:12.4px;color:#d2d2d2">-7.23</div>
<div class="t" style="left:1723px;top:186.8px;font-size:12.4px;color:#c8c8c8">Y</div>
<div class="a fld" style="left:1737px;top:186.0px;width:71.5px"></div>
<div class="t" style="left:1740px;top:186.8px;font-size:12.4px;color:#d2d2d2">-2.71</div>
<div class="t" style="left:1813.5px;top:186.8px;font-size:12.4px;color:#c8c8c8">Z</div>
<div class="a fld" style="left:1827px;top:186.0px;width:71.5px"></div>
<div class="t" style="left:1830px;top:186.8px;font-size:12.4px;color:#d2d2d2">0</div>
<div class="t" style="left:1464px;top:206.8px;font-size:12.4px;color:#c8c8c8">Rotation</div>
<div class="t" style="left:1632px;top:206.8px;font-size:12.4px;color:#c8c8c8">X</div>
<div class="a fld" style="left:1646px;top:206.0px;width:71.5px"></div>
<div class="t" style="left:1649px;top:206.8px;font-size:12.4px;color:#d2d2d2">0</div>
<div class="t" style="left:1723px;top:206.8px;font-size:12.4px;color:#c8c8c8">Y</div>
<div class="a fld" style="left:1737px;top:206.0px;width:71.5px"></div>
<div class="t" style="left:1740px;top:206.8px;font-size:12.4px;color:#d2d2d2">0</div>
<div class="t" style="left:1813.5px;top:206.8px;font-size:12.4px;color:#c8c8c8">Z</div>
<div class="a fld" style="left:1827px;top:206.0px;width:71.5px"></div>
<div class="t" style="left:1830px;top:206.8px;font-size:12.4px;color:#d2d2d2">0</div>
<div class="t" style="left:1464px;top:226.8px;font-size:12.4px;color:#c8c8c8">Scale</div>
<div class="t" style="left:1632px;top:226.8px;font-size:12.4px;color:#c8c8c8">X</div>
<div class="a fld" style="left:1646px;top:226.0px;width:71.5px"></div>
<div class="t" style="left:1649px;top:226.8px;font-size:12.4px;color:#d2d2d2">0.374918</div>
<div class="t" style="left:1723px;top:226.8px;font-size:12.4px;color:#c8c8c8">Y</div>
<div class="a fld" style="left:1737px;top:226.0px;width:71.5px"></div>
<div class="t" style="left:1740px;top:226.8px;font-size:12.4px;color:#d2d2d2">0.3211568</div>
<div class="t" style="left:1813.5px;top:226.8px;font-size:12.4px;color:#c8c8c8">Z</div>
<div class="a fld" style="left:1827px;top:226.0px;width:71.5px"></div>
<div class="t" style="left:1830px;top:226.8px;font-size:12.4px;color:#d2d2d2">1</div>
<svg style="left:1609px;top:229px" width="14" height="12" viewBox="0 0 14 12"><path d="M5.500 3H4a3 3 0 0 0 0 6h1.500M8.500 3H10a3 3 0 0 1 0 6H8.500" stroke="#c4c4c4" stroke-width="1.200" fill="none"/><path d="M2 .8 12 11.200" stroke="#383838" stroke-width="2.800"/><path d="M2 .8 12 11.200" stroke="#c4c4c4" stroke-width="1.100"/></svg>
<div class="a" style="left:1445px;top:252px;width:458px;height:1px;background:#1a1a1a"></div>
<div class="a" style="left:1445px;top:253px;width:458px;height:21px;background:#3e3e3e"></div>
<svg style="left:1450.5px;top:259.5px" width="10" height="8" viewBox="0 0 10 8"><path d="M.5 .5h9L5 7.500z" fill="#7e7e7e"/></svg>
<svg style="left:1466px;top:255.5px" width="15" height="16" viewBox="0 0 15 16"><rect x="1.500" y="2" width="11" height="11" stroke="#b9a0e8" stroke-width="1.200" fill="none"/><rect x="0" y=".5" width="3" height="3" fill="#b9a0e8"/><rect x="11" y=".5" width="3" height="3" fill="#b9a0e8"/><rect x="0" y="11.500" width="3" height="3" fill="#b9a0e8"/><ellipse cx="9.500" cy="11.500" rx="4.800" ry="3.300" fill="#3e3e3e" stroke="#e0e0e0" stroke-width="1.100"/><circle cx="9.500" cy="11.500" r="1.600" fill="#e0e0e0"/><circle cx="6" cy="6.500" r="2" fill="#e0e0e0"/></svg>
<div class="a cb" style="left:1485px;top:256.0px"></div>
<svg style="left:1487px;top:259.5px" width="10" height="8" viewBox="0 0 10 8"><path d="M1 4 3.800 6.800 9 1.200" stroke="#e8e8e8" stroke-width="1.500" fill="none"/></svg>
<div class="t b" style="left:1505px;top:255.8px;font-size:12.4px;color:#dcdcdc">Sprite Renderer</div>
<svg style="left:1845px;top:258.0px" width="11" height="11" viewBox="0 0 11 11"><circle cx="5.500" cy="5.500" r="5.300" fill="#c4c4c4"/></svg>
<div class="t b" style="left:1847.300px;top:255.2px;font-size:9.500px;color:#3e3e3e">?</div>
<svg style="left:1864px;top:258.5px" width="12" height="10" viewBox="0 0 12 10"><path d="M0 2.500h12M0 7.500h12" stroke="#c4c4c4" stroke-width="1.200"/><path d="M7.500 0v5M3.500 5v5" stroke="#c4c4c4" stroke-width="1.600"/></svg>
<svg style="left:1888.500px;top:258.0px" width="4" height="12" viewBox="0 0 4 12"><rect x="1" y="0" width="2" height="2" fill="#c4c4c4"/><rect x="1" y="4.500" width="2" height="2" fill="#c4c4c4"/><rect x="1" y="9" width="2" height="2" fill="#c4c4c4"/></svg>
<div class="a" style="left:1445px;top:274px;width:458px;height:1px;background:#303030"></div>
<div class="t" style="left:1464px;top:279.8px;font-size:12.4px;color:#c8c8c8">Sprite</div>
<div class="a fld" style="left:1631px;top:279.0px;width:267.5px"></div>
<div class="a" style="left:1879.5px;top:280.0px;width:18px;height:15px;background:#373737;border-radius:0 3px 3px 0"></div>
<svg style="left:1883.0px;top:282.0px" width="11" height="11" viewBox="0 0 11 11"><circle cx="5.500" cy="5.500" r="4.500" stroke="#c4c4c4" stroke-width="1" fill="none"/><circle cx="5.500" cy="5.500" r="1.700" fill="#c4c4c4"/></svg>
<svg style="left:1635px;top:282px" width="11" height="11" viewBox="0 0 11 11"><path d="M.5 3V.5H3M8 .5h2.500V3M10.500 8v2.500H8M3 10.500H.5V8" stroke="#b9a0e8" stroke-width="1" fill="none"/><rect x="3.200" y="3.200" width="4.600" height="4.600" fill="#e0e0e0"/></svg>
<div class="t" style="left:1647px;top:279.8px;font-size:12.4px;color:#e4e4e4">Play_0</div>
<div class="t" style="left:1464px;top:299.8px;font-size:12.4px;color:#c8c8c8">Color</div>
<div class="a" style="left:1632px;top:299.5px;width:248px;height:15.5px;background:#ffffff;border-radius:2px 0 0 2px"></div>
<div class="a" style="left:1880px;top:299.5px;width:18.5px;height:15.5px;background:#333;border-radius:0 3px 3px 0"></div>
<svg style="left:1884px;top:301px" width="12" height="12" viewBox="0 0 12 12"><path d="M1 11 1.800 8.500 7 3.300 8.700 5 3.500 10.200z" fill="#c4c4c4"/><path d="M6.300 2.600 9.400 5.700M7.800 3.200 9.800 1.200a1.200 1.200 0 0 1 1.700 1.700L9.500 4.900" stroke="#c4c4c4" stroke-width="1.600" fill="none"/></svg>
<div class="t" style="left:1464px;top:319.8px;font-size:12.4px;color:#c8c8c8">Flip</div>
<div class="a cb" style="left:1631px;top:320.0px"></div>
<div class="t" style="left:1649px;top:319.8px;font-size:12.4px;color:#c8c8c8">X</div>
<div class="a cb" style="left:1661px;top:320.0px"></div>
<div class="t" style="left:1679px;top:319.8px;font-size:12.4px;color:#c8c8c8">Y</div>
<div class="t" style="left:1464px;top:339.8px;font-size:12.4px;color:#c8c8c8">Draw Mode</div>
<div class="a dd" style="left:1631.5px;top:339.0px;width:267.0px"></div>
<div class="t" style="left:1635.0px;top:339.3px;font-size:12.4px;color:#e4e4e4">Simple</div>
<svg style="left:1885.0px;top:345.0px" width="8" height="5" viewBox="0 0 8 5"><path d="M0 0h8L4 4.600z" fill="#c4c4c4"/></svg>
<div class="t" style="left:1464px;top:359.8px;font-size:12.4px;color:#c8c8c8">Mask Interaction</div>
<div class="a dd" style="left:1631.5px;top:359.0px;width:267.0px"></div>
<div class="t" style="left:1635.0px;top:359.3px;font-size:12.4px;color:#e4e4e4">None</div>
<svg style="left:1885.0px;top:365.0px" width="8" height="5" viewBox="0 0 8 5"><path d="M0 0h8L4 4.600z" fill="#c4c4c4"/></svg>
<div class="t" style="left:1464px;top:379.8px;font-size:12.4px;color:#c8c8c8">Sprite Sort Point</div>
<div class="a dd" style="left:1631.5px;top:379.0px;width:267.0px"></div>
<div class="t" style="left:1635.0px;top:379.3px;font-size:12.4px;color:#e4e4e4">Center</div>
<svg style="left:1885.0px;top:385.0px" width="8" height="5" viewBox="0 0 8 5"><path d="M0 0h8L4 4.600z" fill="#c4c4c4"/></svg>
<div class="t" style="left:1464px;top:399.8px;font-size:12.4px;color:#c8c8c8">Material</div>
<div class="a fld" style="left:1631px;top:399.0px;width:267.5px"></div>
<div class="a" style="left:1879.5px;top:400.0px;width:18px;height:15px;background:#373737;border-radius:0 3px 3px 0"></div>
<svg style="left:1883.0px;top:402.0px" width="11" height="11" viewBox="0 0 11 11"><circle cx="5.500" cy="5.500" r="4.500" stroke="#c4c4c4" stroke-width="1" fill="none"/><circle cx="5.500" cy="5.500" r="1.700" fill="#c4c4c4"/></svg>
<svg style="left:1635px;top:402.500px" width="10" height="10" viewBox="0 0 10 10"><circle cx="5" cy="5" r="4.800" fill="#4aa8e8"/><circle cx="3.800" cy="3.800" r="2.600" fill="#d8f0ff"/></svg>
<div class="t" style="left:1647px;top:399.8px;font-size:12.4px;color:#e4e4e4">Sprites-Default</div>
<svg style="left:1450.5px;top:423.5px" width="10" height="8" viewBox="0 0 10 8"><path d="M.5 .5h9L5 7.500z" fill="#7e7e7e"/></svg>
<div class="t b" style="left:1465px;top:419.8px;font-size:12.4px;color:#dcdcdc">Additional Settings</div>
<div class="t" style="left:1479px;top:439.8px;font-size:12.4px;color:#c8c8c8">Sorting Layer</div>
<div class="a dd" style="left:1631.5px;top:439.0px;width:267.0px"></div>
<div class="t" style="left:1635.0px;top:439.3px;font-size:12.4px;color:#e4e4e4">Default</div>
<svg style="left:1885.0px;top:445.0px" width="8" height="5" viewBox="0 0 8 5"><path d="M0 0h8L4 4.600z" fill="#c4c4c4"/></svg>
<div class="t" style="left:1479px;top:459.8px;font-size:12.4px;color:#c8c8c8">Order in Layer</div>
<div class="a fld" style="left:1631px;top:459.0px;width:267.5px"></div>
<div class="t" style="left:1634px;top:459.8px;font-size:12.4px;color:#d2d2d2">1</div>
<div class="a" style="left:1445px;top:485px;width:458px;height:1px;background:#1a1a1a"></div>
<div class="a" style="left:1445px;top:486px;width:458px;height:21px;background:#3e3e3e"></div>
<svg style="left:1451.5px;top:491.5px" width="8" height="10" viewBox="0 0 8 10"><path d="M.5 .5v9L7.500 5z" fill="#7e7e7e"/></svg>
<svg style="left:1466px;top:488.5px" width="15" height="16" viewBox="0 0 15 16"><path d="M1 3c2.200 1.500 3 3 3 5h7.500" stroke="#e0e0e0" stroke-width="1.500" fill="none"/><path d="M4 8c0 2-.8 3.800-2.800 5.500" stroke="#5fe0d0" stroke-width="1.600" fill="none"/><path d="M9.500 4.800 14 8 9.500 11.200" stroke="#e0e0e0" stroke-width="1.500" fill="none"/></svg>
<div class="a cb" style="left:1485px;top:489.0px"></div>
<svg style="left:1487px;top:492.5px" width="10" height="8" viewBox="0 0 10 8"><path d="M1 4 3.800 6.800 9 1.200" stroke="#e8e8e8" stroke-width="1.500" fill="none"/></svg>
<div class="t b" style="left:1505px;top:488.8px;font-size:12.4px;color:#dcdcdc">Animator</div>
<svg style="left:1845px;top:491.0px" width="11" height="11" viewBox="0 0 11 11"><circle cx="5.500" cy="5.500" r="5.300" fill="#c4c4c4"/></svg>
<div class="t b" style="left:1847.300px;top:488.2px;font-size:9.500px;color:#3e3e3e">?</div>
<svg style="left:1864px;top:491.5px" width="12" height="10" viewBox="0 0 12 10"><path d="M0 2.500h12M0 7.500h12" stroke="#c4c4c4" stroke-width="1.200"/><path d="M7.500 0v5M3.500 5v5" stroke="#c4c4c4" stroke-width="1.600"/></svg>
<svg style="left:1888.500px;top:491.0px" width="4" height="12" viewBox="0 0 4 12"><rect x="1" y="0" width="2" height="2" fill="#c4c4c4"/><rect x="1" y="4.500" width="2" height="2" fill="#c4c4c4"/><rect x="1" y="9" width="2" height="2" fill="#c4c4c4"/></svg>
<div class="a" style="left:1445px;top:507px;width:458px;height:1px;background:#303030"></div>
<div class="a" style="left:1445px;top:507px;width:458px;height:1px;background:#1a1a1a"></div>
<div class="a" style="left:1445px;top:508px;width:458px;height:21px;background:#3e3e3e"></div>
<svg style="left:1450.5px;top:514.5px" width="10" height="8" viewBox="0 0 10 8"><path d="M.5 .5h9L5 7.500z" fill="#7e7e7e"/></svg>
<svg style="left:1466px;top:510.5px" width="15" height="16" viewBox="0 0 15 16"><rect x="1" y="2" width="12" height="12" fill="#a6ea47"/><rect x="4" y="5" width="6" height="6" fill="#3e3e3e"/></svg>
<div class="a cb" style="left:1485px;top:511.0px"></div>
<svg style="left:1487px;top:514.5px" width="10" height="8" viewBox="0 0 10 8"><path d="M1 4 3.800 6.800 9 1.200" stroke="#e8e8e8" stroke-width="1.500" fill="none"/></svg>
<div class="t b" style="left:1505px;top:510.8px;font-size:12.4px;color:#dcdcdc">Box Collider 2D</div>
<svg style="left:1845px;top:513.0px" width="11" height="11" viewBox="0 0 11 11"><circle cx="5.500" cy="5.500" r="5.300" fill="#c4c4c4"/></svg>
<div class="t b" style="left:1847.300px;top:510.2px;font-size:9.500px;color:#3e3e3e">?</div>
<svg style="left:1864px;top:513.5px" width="12" height="10" viewBox="0 0 12 10"><path d="M0 2.500h12M0 7.500h12" stroke="#c4c4c4" stroke-width="1.200"/><path d="M7.500 0v5M3.500 5v5" stroke="#c4c4c4" stroke-width="1.600"/></svg>
<svg style="left:1888.500px;top:513.0px" width="4" height="12" viewBox="0 0 4 12"><rect x="1" y="0" width="2" height="2" fill="#c4c4c4"/><rect x="1" y="4.500" width="2" height="2" fill="#c4c4c4"/><rect x="1" y="9" width="2" height="2" fill="#c4c4c4"/></svg>
<div class="a" style="left:1445px;top:529px;width:458px;height:1px;background:#303030"></div>
<div class="t" style="left:1464px;top:534.8px;font-size:12.4px;color:#c8c8c8">Edit Collider</div>
<div class="a" style="left:1630px;top:535px;width:32px;height:22px;background:#3a3a3a;border:1px solid #242424;border-radius:3px"></div>
<svg style="left:1638px;top:539px" width="16" height="14" viewBox="0 0 16 14"><path d="M2.500 10 7 2.500 9.500 2.500 13 9.500" stroke="#c8c8c8" stroke-width="1.100" fill="none"/><rect x="6.200" y="1" width="3.200" height="3.200" rx=".6" fill="#3a3a3a" stroke="#c8c8c8" stroke-width="1"/><rect x="1" y="9.500" width="3.200" height="3.200" fill="#3a3a3a" stroke="#c8c8c8" stroke-width="1"/><rect x="11.500" y="8.500" width="3" height="3" fill="#3a3a3a" stroke="#c8c8c8" stroke-width="1"/></svg>
<div class="t" style="left:1464px;top:563.8px;font-size:12.4px;color:#c8c8c8">Material</div>
<div class="a fld" style="left:1631px;top:563.0px;width:267.5px"></div>
<div class="t" style="left:1634px;top:563.8px;font-size:12.4px;color:#e4e4e4">None (Physics Material 2D)</div>
<div class="a" style="left:1879.5px;top:564.0px;width:18px;height:15px;background:#373737;border-radius:0 3px 3px 0"></div>
<svg style="left:1883.0px;top:566.0px" width="11" height="11" viewBox="0 0 11 11"><circle cx="5.500" cy="5.500" r="4.500" stroke="#c4c4c4" stroke-width="1" fill="none"/><circle cx="5.500" cy="5.500" r="1.700" fill="#c4c4c4"/></svg>
<div class="t" style="left:1464px;top:583.8px;font-size:12.4px;color:#c8c8c8">Is Trigger</div>
<div class="a cb" style="left:1631px;top:584.0px"></div>
<div class="t" style="left:1464px;top:603.8px;font-size:12.4px;color:#c8c8c8">Used By Effector</div>
<div class="a cb" style="left:1631px;top:604.0px"></div>
<div class="t" style="left:1464px;top:623.8px;font-size:12.4px;color:#c8c8c8">Used By Composite</div>
<div class="a cb" style="left:1631px;top:624.0px"></div>
<div class="t" style="left:1464px;top:643.8px;font-size:12.4px;color:#c8c8c8">Auto Tiling</div>
<div class="a cb" style="left:1631px;top:644.0px"></div>
<div class="t" style="left:1464px;top:663.8px;font-size:12.4px;color:#c8c8c8">Offset</div>
<div class="t" style="left:1632px;top:663.8px;font-size:12.4px;color:#c8c8c8">X</div>
<div class="a fld" style="left:1646px;top:663.0px;width:71.5px"></div>
<div class="t" style="left:1649px;top:663.8px;font-size:12.4px;color:#d2d2d2">0.202589</div>
<div class="t" style="left:1723px;top:663.8px;font-size:12.4px;color:#c8c8c8">Y</div>
<div class="a fld" style="left:1737px;top:663.0px;width:71.5px"></div>
<div class="t" style="left:1740px;top:663.8px;font-size:12.4px;color:#d2d2d2">0.1824207</div>
<div class="t" style="left:1464px;top:683.8px;font-size:12.4px;color:#c8c8c8">Size</div>
<div class="t" style="left:1632px;top:683.8px;font-size:12.4px;color:#c8c8c8">X</div>
<div class="a fld" style="left:1646px;top:683.0px;width:71.5px"></div>
<div class="t" style="left:1649px;top:683.8px;font-size:12.4px;color:#d2d2d2">5.324898</div>
<div class="t" style="left:1723px;top:683.8px;font-size:12.4px;color:#c8c8c8">Y</div>
<div class="a fld" style="left:1737px;top:683.0px;width:71.5px"></div>
<div class="t" style="left:1740px;top:683.8px;font-size:12.4px;color:#d2d2d2">7.41145</div>
<div class="t" style="left:1464px;top:703.8px;font-size:12.4px;color:#c8c8c8">Edge Radius</div>
<div class="a fld" style="left:1631px;top:703.0px;width:267.5px"></div>
<div class="t" style="left:1634px;top:703.8px;font-size:12.4px;color:#d2d2d2">0</div>
<svg style="left:1452.5px;top:726.5px" width="8" height="10" viewBox="0 0 8 10"><path d="M.5 .5v9L7.500 5z" fill="#7e7e7e"/></svg>
<div class="t" style="left:1464px;top:723.8px;font-size:12.4px;color:#c8c8c8">Layer Overrides</div>
<svg style="left:1452.5px;top:744.5px" width="8" height="10" viewBox="0 0 8 10"><path d="M.5 .5v9L7.500 5z" fill="#7e7e7e"/></svg>
<div class="t" style="left:1464px;top:741.8px;font-size:12.4px;color:#c8c8c8">Info</div>
<div class="a" style="left:1445px;top:765px;width:458px;height:1px;background:#1a1a1a"></div>
<div class="a" style="left:1445px;top:766px;width:458px;height:21px;background:#3e3e3e"></div>
<svg style="left:1451.5px;top:771.5px" width="8" height="10" viewBox="0 0 8 10"><path d="M.5 .5v9L7.500 5z" fill="#7e7e7e"/></svg>
<svg style="left:1466px;top:768.5px" width="15" height="16" viewBox="0 0 15 16"><circle cx="7.500" cy="8" r="6.300" fill="#3e3e3e" stroke="#a6ea47" stroke-width="1.400"/><path d="M7.500 8V1.700A6.300 6.300 0 0 0 1.200 8zM7.500 8v6.300A6.300 6.300 0 0 0 13.800 8z" fill="#a6ea47"/></svg>
<div class="t b" style="left:1505px;top:768.8px;font-size:12.4px;color:#dcdcdc">Rigidbody 2D</div>
<svg style="left:1845px;top:771.0px" width="11" height="11" viewBox="0 0 11 11"><circle cx="5.500" cy="5.500" r="5.300" fill="#c4c4c4"/></svg>
<div class="t b" style="left:1847.300px;top:768.2px;font-size:9.500px;color:#3e3e3e">?</div>
<svg style="left:1864px;top:771.5px" width="12" height="10" viewBox="0 0 12 10"><path d="M0 2.500h12M0 7.500h12" stroke="#c4c4c4" stroke-width="1.200"/><path d="M7.500 0v5M3.500 5v5" stroke="#c4c4c4" stroke-width="1.600"/></svg>
<svg style="left:1888.500px;top:771.0px" width="4" height="12" viewBox="0 0 4 12"><rect x="1" y="0" width="2" height="2" fill="#c4c4c4"/><rect x="1" y="4.500" width="2" height="2" fill="#c4c4c4"/><rect x="1" y="9" width="2" height="2" fill="#c4c4c4"/></svg>
<div class="a" style="left:1445px;top:787px;width:458px;height:1px;background:#303030"></div>
<div class="a" style="left:1445px;top:787px;width:458px;height:1px;background:#1a1a1a"></div>
<div class="a" style="left:1445px;top:788px;width:458px;height:21px;background:#3e3e3e"></div>
<svg style="left:1450.5px;top:794.5px" width="10" height="8" viewBox="0 0 10 8"><path d="M.5 .5h9L5 7.500z" fill="#7e7e7e"/></svg>
<svg style="left:1466px;top:790.5px" width="15" height="16" viewBox="0 0 15 16"><path d="M2 1h8l3 3v11H2z" fill="#f2f2f2"/></svg>
<div class="a cb" style="left:1485px;top:791.0px"></div>
<svg style="left:1487px;top:794.5px" width="10" height="8" viewBox="0 0 10 8"><path d="M1 4 3.800 6.800 9 1.200" stroke="#e8e8e8" stroke-width="1.500" fill="none"/></svg>
<div class="t b" style="left:1505px;top:790.8px;font-size:12.4px;color:#dcdcdc">Player Controller (Script)</div>
<svg style="left:1845px;top:793.0px" width="11" height="11" viewBox="0 0 11 11"><circle cx="5.500" cy="5.500" r="5.300" fill="#c4c4c4"/></svg>
<div class="t b" style="left:1847.300px;top:790.2px;font-size:9.500px;color:#3e3e3e">?</div>
<svg style="left:1864px;top:793.5px" width="12" height="10" viewBox="0 0 12 10"><path d="M0 2.500h12M0 7.500h12" stroke="#c4c4c4" stroke-width="1.200"/><path d="M7.500 0v5M3.500 5v5" stroke="#c4c4c4" stroke-width="1.600"/></svg>
<svg style="left:1888.500px;top:793.0px" width="4" height="12" viewBox="0 0 4 12"><rect x="1" y="0" width="2" height="2" fill="#c4c4c4"/><rect x="1" y="4.500" width="2" height="2" fill="#c4c4c4"/><rect x="1" y="9" width="2" height="2" fill="#c4c4c4"/></svg>
<div class="a" style="left:1445px;top:809px;width:458px;height:1px;background:#303030"></div>
<div class="t b" style="left:1469px;top:790.500px;font-size:11px;color:#3a9a3a">#</div>
<div class="t" style="left:1464px;top:813.8px;font-size:12.4px;color:#8a8a8a">Script</div>
<div class="a fld dim" style="left:1637px;top:813.0px;width:261.5px"></div>
<div class="a" style="left:1879.5px;top:814.0px;width:18px;height:15px;background:#333;border-radius:0 3px 3px 0"></div>
<svg style="left:1883.0px;top:816.0px" width="11" height="11" viewBox="0 0 11 11"><circle cx="5.500" cy="5.500" r="4.500" stroke="#8a8a8a" stroke-width="1" fill="none"/><circle cx="5.500" cy="5.500" r="1.700" fill="#8a8a8a"/></svg>
<svg style="left:1641px;top:816px" width="10" height="11" viewBox="0 0 10 11"><path d="M1 .5h5.500L9 3v7.500H1z" fill="#b8b8b8"/></svg><div class="t b" style="left:1643px;top:814px;font-size:8px;color:#3a8a3a">#</div>
<div class="t" style="left:1654px;top:813.8px;font-size:12.4px;color:#8f8f8f">PlayerController</div>
<div class="t" style="left:1464px;top:833.8px;font-size:12.4px;color:#c8c8c8">Speed</div>
<div class="a fld" style="left:1637px;top:833.0px;width:261.5px"></div>
<div class="t" style="left:1640px;top:833.8px;font-size:12.4px;color:#d2d2d2">1</div>
<div class="t" style="left:1464px;top:853.8px;font-size:12.4px;color:#c8c8c8">Jump Speed</div>
<div class="a fld" style="left:1637px;top:853.0px;width:261.5px"></div>
<div class="t" style="left:1640px;top:853.8px;font-size:12.4px;color:#d2d2d2">9</div>
<div class="t" style="left:1464px;top:873.8px;font-size:12.4px;color:#c8c8c8">Max Speed</div>
<div class="a fld" style="left:1637px;top:873.0px;width:261.5px"></div>
<div class="t" style="left:1640px;top:873.8px;font-size:12.4px;color:#d2d2d2">10</div>
<div class="t" style="left:1464px;top:893.8px;font-size:12.4px;color:#c8c8c8">Jump Power</div>
<div class="a fld" style="left:1637px;top:893.0px;width:261.5px"></div>
<div class="t" style="left:1640px;top:893.8px;font-size:12.4px;color:#d2d2d2">20</div>
<div class="t" style="left:1464px;top:911.8px;font-size:12.4px;color:#c8c8c8">Grounded</div>
<div class="a cb" style="left:1637px;top:912.5px"></div>
<div class="t" style="left:1464px;top:932.8px;font-size:12.4px;color:#c8c8c8">Jump Rate</div>
<div class="a fld" style="left:1637px;top:932.0px;width:261.5px"></div>
<div class="t" style="left:1640px;top:932.8px;font-size:12.4px;color:#d2d2d2">1</div>
<div class="t" style="left:1464px;top:952.8px;font-size:12.4px;color:#c8c8c8">Next Jump Press</div>
<div class="a fld" style="left:1637px;top:952.0px;width:261.5px"></div>
<div class="t" style="left:1640px;top:952.8px;font-size:12.4px;color:#d2d2d2">0</div>
<div class="t" style="left:1464px;top:972.8px;font-size:12.4px;color:#c8c8c8">Fire Rate</div>
<div class="a fld" style="left:1637px;top:972.0px;width:261.5px"></div>
<div class="t" style="left:1640px;top:972.8px;font-size:12.4px;color:#d2d2d2">0.2</div>
<div class="t" style="left:1464px;top:992.8px;font-size:12.4px;color:#c8c8c8">Next Fire Rate</div>
<div class="a fld" style="left:1637px;top:992.0px;width:261.5px"></div>
<div class="t" style="left:1640px;top:992.8px;font-size:12.4px;color:#d2d2d2">0</div>
<div class="a" style="left:1903px;top:100px;width:13px;height:902px;background:#353535"></div>
<div class="a" style="left:1903px;top:100px;width:1px;height:902px;background:#2c2c2c"></div>
<svg style="left:1906px;top:104px" width="8" height="5" viewBox="0 0 8 5"><path d="M0 4.600h8L4 0z" fill="#c4c4c4"/></svg>
<svg style="left:1906px;top:991px" width="8" height="5" viewBox="0 0 8 5"><path d="M0 0h8L4 4.600z" fill="#c4c4c4"/></svg>
<div class="a" style="left:1905px;top:117px;width:9px;height:748px;background:#5f5f5f;border-radius:4.5px"></div></div>
<!-- taskbar.html -->
<div class="a" style="left:0;top:1032px;width:1920px;height:48px;background:#e5e6e2"></div>
<div class="a" style="left:0;top:1032px;width:1920px;height:1px;background:#d0d1cd"></div>
<!-- start -->
<svg style="left:21px;top:1045px" width="23" height="23" viewBox="0 0 23 23"><defs><linearGradient id="wg" x1="0" y1="0" x2="1" y2="1"><stop offset="0" stop-color="#4cc2ff"/><stop offset="1" stop-color="#0a6fd6"/></linearGradient></defs><rect x="0" y="0" width="11" height="11" rx=".8" fill="url(#wg)"/><rect x="12" y="0" width="11" height="11" rx=".8" fill="#1f8fe6"/><rect x="0" y="12" width="11" height="11" rx=".8" fill="#1a8ae2"/><rect x="12" y="12" width="11" height="11" rx=".8" fill="#0a72d8"/></svg>
<!-- search -->
<div class="a" style="left:58px;top:1041px;width:218px;height:30px;border-radius:15px;background:#f6f6f4;border:1px solid #d9d9d6;box-shadow:0 1px 1px rgba(0,0,0,.08)"></div>
<svg style="left:69px;top:1048px" width="16" height="17" viewBox="0 0 16 17"><circle cx="6.500" cy="6.800" r="5.300" stroke="#1a1a1a" stroke-width="1.500" fill="none"/><path d="M10.300 10.800 14.500 15.200" stroke="#1a1a1a" stroke-width="1.700" stroke-linecap="round"/></svg>
<div class="t" style="left:94px;top:1048.800px;font-size:13.500px;color:#5e5e5e">Search</div>
<svg style="left:228px;top:1043px" width="42" height="28" viewBox="0 0 42 28"><path d="M3 3Q1 1 2.500 5L7 9Q6 13 8 17L9 27H14Q18 27.500 26 26.500Q34 26 39 23.500Q36 20 30 21.500Q22 23.500 16 21Q15 15 16.500 11Q22 6 25 4.500Q20 4 15.500 7Q12 5 9.500 6.500Q6 4 3 3z" fill="#e2962a"/><path d="M8.500 10Q11 9 14 11L13.500 17Q11.500 19 10 16.500z" fill="#f0c060"/><path d="M9 1 10.500 6M17 1.500 14.500 6.500" stroke="#2a3a8a" stroke-width="1.200"/><circle cx="10" cy="12" r=".8" fill="#222"/><path d="M29.500 9Q32.500 8 33 11L36.500 18Q37 20 35.500 20.500L34 16Q31 14 29.500 9z" fill="#4a5a9a"/><circle cx="30.500" cy="9.500" r="1.800" fill="#8a6a5a"/><path d="M27.500 8.500 29 9.500" stroke="#c03030" stroke-width="1"/><path d="M34.500 20V23" stroke="#555" stroke-width=".7"/></svg>
<!-- task view -->
<svg style="left:289px;top:1045px" width="25" height="23" viewBox="0 0 25 23"><rect x="7" y="0" width="17.500" height="15" rx="1.500" fill="#f4f4f2" stroke="#dcdcda" stroke-width=".6"/><rect x="0" y="6.500" width="18" height="16" rx="1.500" fill="#1f1f1f"/><rect x="7" y="6.500" width="11" height="8.500" fill="#a8a8a8"/></svg>
<!-- explorer -->
<svg style="left:333px;top:1045px" width="25" height="23" viewBox="0 0 25 23"><path d="M1 2.500A1.500 1.500 0 0 1 2.500 1H8.500L11 3.500H22.500A1.500 1.500 0 0 1 24 5V8H1z" fill="#e8a420"/><rect x="0" y="5.500" width="25" height="17" rx="1.800" fill="#fbcf45"/><rect x="0" y="14" width="25" height="8.500" rx="1.800" fill="#f7c030"/><rect x="6" y="14.500" width="13" height="8" rx="1.500" fill="#1a7ad0"/><rect x="9" y="16.500" width="7" height="2" rx="1" fill="#4aa8f0"/></svg>
<div class="a dot" style="left:342.500px"></div>
<!-- edge -->
<svg style="left:377px;top:1044px" width="25" height="25" viewBox="0 0 25 25"><defs><linearGradient id="eg" x1="0" y1="0" x2="0" y2="1"><stop offset="0" stop-color="#2f9fe8"/><stop offset="1" stop-color="#0b55ae"/></linearGradient><linearGradient id="eg2" x1="0" y1="0" x2="1" y2="0"><stop offset="0" stop-color="#2db4d8"/><stop offset="1" stop-color="#5fd662"/></linearGradient></defs><circle cx="12.500" cy="12.500" r="12" fill="url(#eg)"/><path d="M3 6.500A12 12 0 0 1 24.500 12.500C24.500 16.200 22 17.800 19.500 17.800 16.300 17.800 15 15.200 16.200 13.300 16.200 10.300 13.500 8 10.500 8 7.500 8 4.500 9.500 2.300 13 1.800 10.500 2 8.500 3 6.500z" fill="url(#eg2)"/><path d="M16.200 13.300C15 15.200 16.300 17.800 19.500 17.800 18 19.800 15 20.300 12.500 19.300 9.500 18 9 14.500 11 12.800 12.700 11.600 15.300 12 16.200 13.300z" fill="#e5e6e2"/><path d="M2.300 13C3 19 7.500 24.300 13.500 24.400 10 23.300 7 20 7.300 15.800 7.600 12 10.500 9.800 13.300 10 11 7.800 5 8 2.300 13z" fill="#0c50a6"/></svg>
<!-- store -->
<svg style="left:421px;top:1044px" width="24" height="25" viewBox="0 0 24 25"><path d="M7 6V4A2.500 2.500 0 0 1 9.500 1.500H14.500A2.500 2.500 0 0 1 17 4V6" stroke="#3aa0f0" stroke-width="1.800" fill="none"/><rect x="0" y="5.500" width="24" height="19" rx="2.500" fill="#12529a"/><rect x="0" y="5.500" width="24" height="6" rx="2.500" fill="#1a66b8"/><rect x="7" y="10" width="4.500" height="4.500" fill="#f25022"/><rect x="12.500" y="10" width="4.500" height="4.500" fill="#7fba00"/><rect x="7" y="15.500" width="4.500" height="4.500" fill="#00a4ef"/><rect x="12.500" y="15.500" width="4.500" height="4.500" fill="#ffb900"/></svg>
<!-- notepad -->
<svg style="left:468px;top:1044px" width="19" height="25" viewBox="0 0 19 25"><rect x="0" y="2" width="19" height="22.500" rx="1.800" fill="#b5562a"/><rect x="0" y="21" width="19" height="2" fill="#f4f4f4"/><rect x="0" y="2" width="19" height="19.500" rx="1.800" fill="#58c4e8"/><path d="M3.500 0V3.500M7.500 0V3.500M11.500 0V3.500M15.500 0V3.500" stroke="#1a7aa8" stroke-width="1.500"/><path d="M3.500 8H15.500M3.500 11.500H15.500M3.500 15H15.500M3.500 18.500H15.500" stroke="#1a8ab8" stroke-width="1.500"/></svg>
<div class="a dot" style="left:474.500px"></div>
<!-- unity hub -->
<svg style="left:510px;top:1044px" width="22" height="25" viewBox="0 0 22 25"><path d="M11 .5 21.500 6.500V18.500L11 24.500 .5 18.500V6.500z" fill="#f2f2f2"/><path d="M11 .5 21.500 6.500V18.500L11 24.500z" fill="#c0c0c0"/><path d="M.5 6.500 11 12.500 21.500 6.500 11 .5z" fill="#fafafa"/><path d="M11 12.500V19M11 12.500 5.500 9.300M11 12.500l5.500-3.200" stroke="#222" stroke-width="1.800" fill="none"/><path d="M11 6 16.500 9.200V15.600L11 18.800 5.500 15.600V9.200z" stroke="#222" stroke-width="1.300" fill="none"/></svg>
<div class="a dot" style="left:518.500px"></div>
<!-- unity active -->
<div class="a" style="left:546px;top:1037px;width:38px;height:38px;border-radius:4px;background:#f4f4f1;border:1px solid #dedfdb"></div>
<svg style="left:554px;top:1044px" width="22" height="25" viewBox="0 0 22 25"><path d="M11 .5 21.500 6.500V18.500L11 24.500 .5 18.500V6.500z" fill="#3a3a3a"/><path d="M11 .5 21.500 6.500V18.500L11 24.500z" fill="#1e1e1e"/><path d="M.5 6.500 11 12.500 21.500 6.500 11 .5z" fill="#4c4c4c"/><path d="M11 12.500V19M11 12.500 5.500 9.300M11 12.500l5.500-3.200" stroke="#fff" stroke-width="1.800" fill="none"/><path d="M11 6 16.500 9.200V15.600L11 18.800 5.500 15.600V9.200z" stroke="#fff" stroke-width="1.300" fill="none"/></svg>
<div class="a" style="left:557px;top:1072px;width:16px;height:3px;border-radius:1.500px;background:#1a73d8"></div>
<!-- VS -->
<svg style="left:597px;top:1044px" width="25" height="25" viewBox="0 0 25 25"><path d="M17.500 .5 24.500 3.500V21.500L17.500 24.500 6 14 2.500 17 .5 16V9L2.500 8 6 11z" fill="#8a52d0"/><path d="M17.500 .5 24.500 3.500V21.500L17.500 24.500z" fill="#b58af0"/><path d="M17.500 7 10.500 12.500 17.500 18z" fill="#e5e6e2"/><path d="M.5 9 2.500 8 17.500 24.500 6 14 2.500 17 .5 16z" fill="#6a38b0"/></svg>
<div class="a dot" style="left:606.500px"></div>
<!-- tray -->
<svg style="left:1698px;top:1051px" width="12" height="7" viewBox="0 0 12 7"><path d="M.8 6.200 6 1 11.200 6.200" stroke="#1a1a1a" stroke-width="1.300" fill="none"/></svg>
<div class="t" style="left:1730px;top:1041px;width:26px;text-align:center;font-size:11px;color:#1a1a1a;font-family:'Liberation Sans','Noto Sans CJK SC',sans-serif">ไทย</div>
<div class="t" style="left:1730px;top:1057px;width:26px;text-align:center;font-size:11.500px;color:#1a1a1a">TH</div>
<svg style="left:1771px;top:1048px" width="18" height="14" viewBox="0 0 18 14"><path d="M1 5A11.500 11.500 0 0 1 17 5M3.500 7.800A8 8 0 0 1 14.500 7.800M6 10.400A4.500 4.500 0 0 1 12 10.400" stroke="#1a1a1a" stroke-width="1.200" fill="none"/><circle cx="9" cy="12.500" r="1.200" fill="#1a1a1a"/></svg>
<svg style="left:1795px;top:1048px" width="18" height="15" viewBox="0 0 18 15"><path d="M1 5.200H4L8 1.500V13.500L4 9.800H1z" stroke="#1a1a1a" stroke-width="1.100" fill="none" stroke-linejoin="round"/><path d="M10.500 5A3.500 3.500 0 0 1 10.500 10M12.500 3A6.500 6.500 0 0 1 12.500 12" stroke="#1a1a1a" stroke-width="1.100" fill="none"/><path d="M14.500 1.200A9 9 0 0 1 14.500 13.800" stroke="#b0b0b0" stroke-width="1" fill="none"/></svg>
<div class="t" style="left:1817px;top:1040px;width:60px;text-align:right;font-size:11.500px;color:#1a1a1a">12:22</div>
<div class="t" style="left:1817px;top:1056px;width:64px;margin-left:-4px;text-align:right;font-size:12.100px;color:#1a1a1a">4/8/2567</div>
<svg style="left:1885px;top:1049px" width="14" height="17" viewBox="0 0 14 17"><path d="M7 0A5 5 0 0 1 12 5V9.500L13.800 12.500H.2L2 9.500V5A5 5 0 0 1 7 0z" fill="#0a5cc4"/><path d="M5 14H9A2 2 0 0 1 5 14z" fill="#0a5cc4"/></svg>

</body></html>
